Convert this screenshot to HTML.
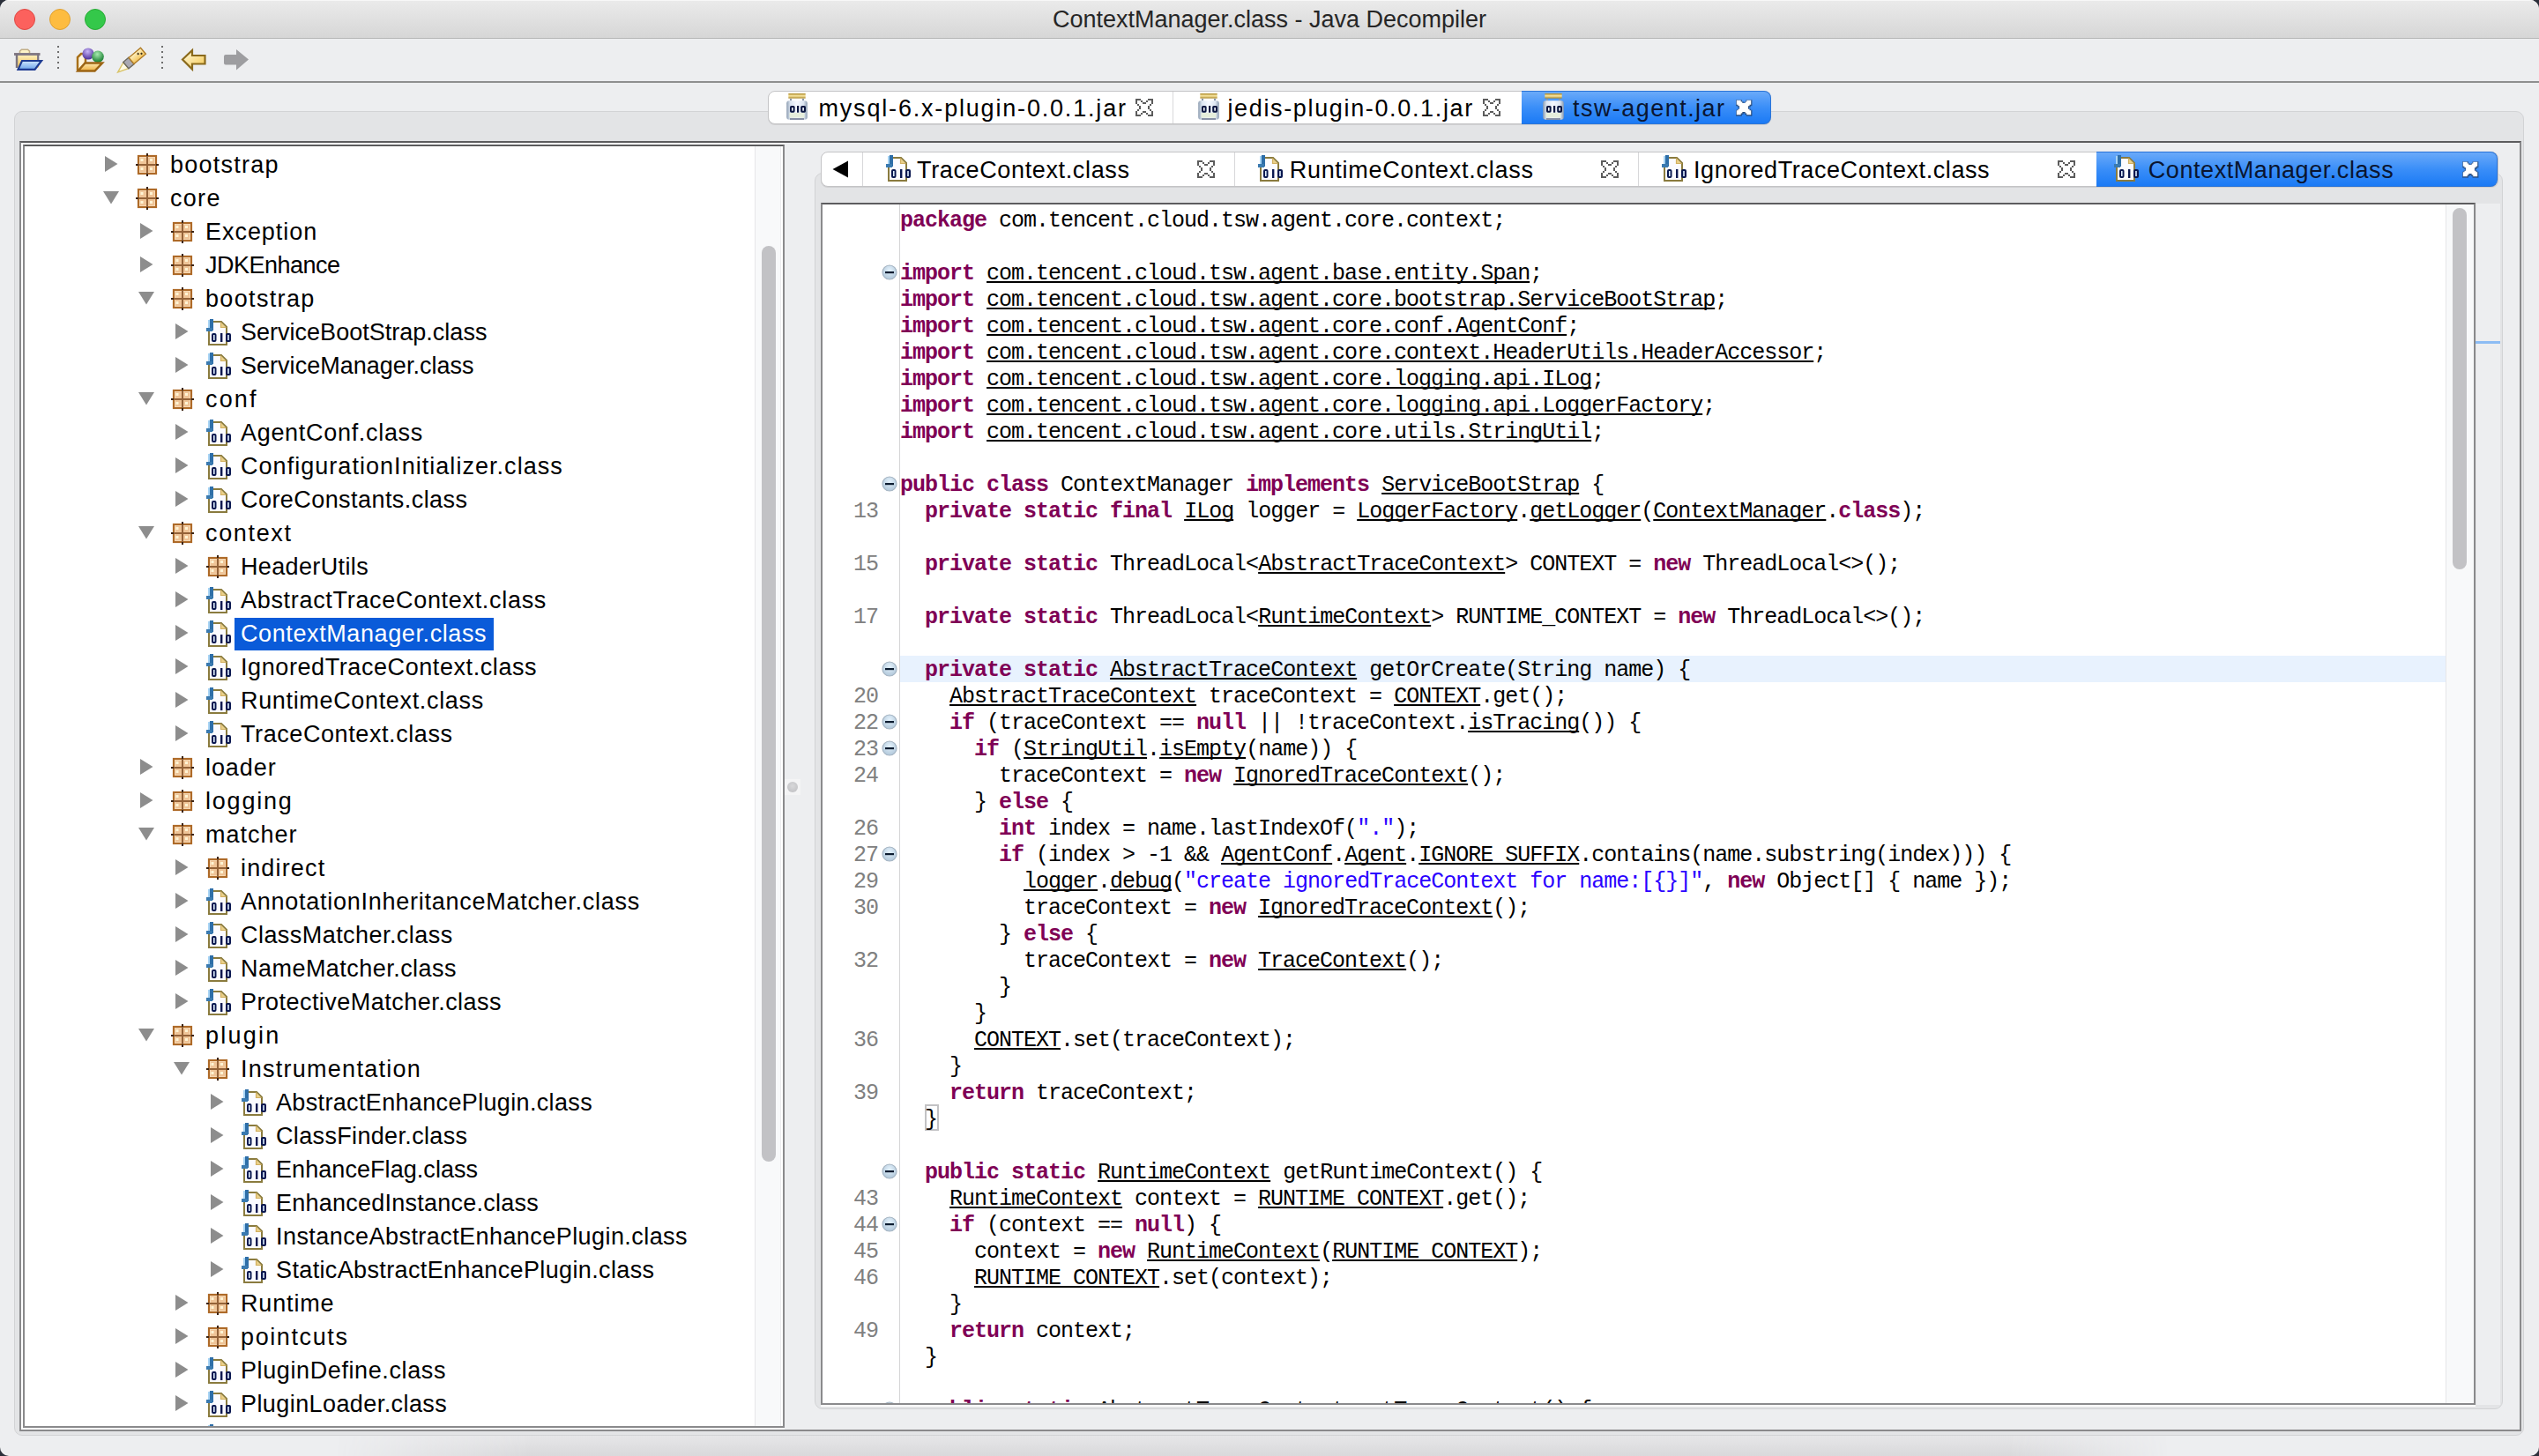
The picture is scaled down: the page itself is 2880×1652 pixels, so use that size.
<!DOCTYPE html><html><head><meta charset="utf-8"><title>ContextManager.class - Java Decompiler</title><style>

*{box-sizing:border-box}
html,body{margin:0;padding:0}
body{width:2880px;height:1652px;overflow:hidden;background:#2b2f3a;position:relative;font-family:"Liberation Sans",sans-serif}
.abs{position:absolute}
#win{position:absolute;left:0;top:0;width:2880px;height:1652px;background:#edeef0;border-radius:10px;overflow:hidden}
.ui{position:absolute;white-space:pre;font-family:"Liberation Sans",sans-serif;font-size:27px;line-height:30px;color:#000}
.code{position:absolute;white-space:pre;font-family:"Liberation Mono",monospace;font-size:25px;line-height:30px;height:30px;color:#000;letter-spacing:-1px}
.k{color:#7f0055;font-weight:bold}
.u{text-decoration:underline;text-decoration-thickness:2px;text-underline-offset:2px;text-decoration-skip-ink:none}
.s{color:#2a00ff}
.ln{position:absolute;white-space:pre;font-family:"Liberation Mono",monospace;font-size:25px;line-height:30px;color:#808080;text-align:right;width:80px;letter-spacing:-1px}

</style></head><body><div id="win">
<div class="abs" style="left:0;top:0;width:2880px;height:44px;background:linear-gradient(#ebebeb,#d6d6d6);border-bottom:1px solid #b6b6b6;box-shadow:inset 0 1px 0 #f8f8f8"></div>
<div class="abs" style="left:16px;top:10px;width:24px;height:24px;border-radius:50%;background:#fc615d;border:1px solid #de4843"></div>
<div class="abs" style="left:56px;top:10px;width:24px;height:24px;border-radius:50%;background:#fdbc40;border:1px solid #dea032"></div>
<div class="abs" style="left:96px;top:10px;width:24px;height:24px;border-radius:50%;background:#34c84a;border:1px solid #27aa35"></div>
<div class="ui" style="left:0;top:7px;width:2880px;text-align:center;font-size:27px;color:#262626">ContextManager.class - Java Decompiler</div>
<div class="abs" style="left:0;top:92px;width:2880px;height:2px;background:#8f8f8f"></div>
<svg class="abs" style="left:0;top:44px" width="300" height="48" viewBox="0 44 300 48">
<defs>
 <linearGradient id="tbY" x1="0" y1="0" x2="0" y2="1"><stop offset="0" stop-color="#fff2c0"/><stop offset="1" stop-color="#f2c35a"/></linearGradient>
 <linearGradient id="tbB" x1="0" y1="0" x2="0" y2="1"><stop offset="0" stop-color="#cfe6fd"/><stop offset="1" stop-color="#6fa6ea"/></linearGradient>
 <linearGradient id="tbO" x1="0" y1="0" x2="0" y2="1"><stop offset="0" stop-color="#fde9b0"/><stop offset="1" stop-color="#eeb040"/></linearGradient>
 <radialGradient id="tbP" cx="45%" cy="30%" r="70%"><stop offset="0" stop-color="#c8b4f8"/><stop offset="1" stop-color="#4a2c98"/></radialGradient>
 <radialGradient id="tbG" cx="45%" cy="30%" r="70%"><stop offset="0" stop-color="#a8eab0"/><stop offset="1" stop-color="#127a2c"/></radialGradient>
 <linearGradient id="tbA" x1="0" y1="0" x2="1" y2="1"><stop offset="0" stop-color="#fffbe0"/><stop offset="1" stop-color="#f6c850"/></linearGradient>
</defs>
<!-- open folder -->
<g>
 <path d="M22.5 60 V58 L24.5 56.2 H31.5 L33.5 58 V60" fill="#fdf4c8" stroke="#c2ae86" stroke-width="1.6"/>
 <rect x="18" y="61.5" width="26" height="15" fill="url(#tbY)"/>
 <path d="M16 61.5 H45.5" stroke="#857c86" stroke-width="3"/>
 <path d="M19 61 V77" stroke="#7a7480" stroke-width="2.4"/>
 <path d="M43.2 61 V68" stroke="#7a7480" stroke-width="2.2"/>
 <path d="M25 69 H47 L39.5 78.8 H20.5 Z" fill="url(#tbB)" stroke="#1f3c92" stroke-width="2.2" stroke-linejoin="miter"/>
</g>
<g fill="#6e6e6e"><rect x="65" y="52" width="2" height="2"/><rect x="65" y="58" width="2" height="2"/><rect x="65" y="64" width="2" height="2"/><rect x="65" y="70" width="2" height="2"/><rect x="65" y="76" width="2" height="2"/></g>
<!-- open type -->
<g>
 <path d="M88 80 V65 L92 61 H97 V72" fill="#fff6e0" stroke="#a8701a" stroke-width="2.5"/>
 <circle cx="100" cy="61" r="6.6" fill="url(#tbP)"/>
 <circle cx="111" cy="64.2" r="6.8" fill="url(#tbG)"/>
 <path d="M96.5 71.5 H116 L107.5 80.5 H88.5 Z" fill="url(#tbO)" stroke="#9c6414" stroke-width="2.5" stroke-linejoin="miter"/>
</g>
<!-- wand -->
<g transform="translate(149 69) rotate(-40)">
 <path d="M-20 0 L-8 -4.5 V4.5 Z" fill="#fffbe4" stroke="#d9c46a" stroke-width="1.4"/>
 <rect x="-8" y="-4.8" width="8" height="9.6" fill="#a9a9b2" stroke="#6c6a60" stroke-width="1.4"/>
 <rect x="0" y="-4.6" width="17.5" height="9.2" fill="url(#tbY)" stroke="#b07c28" stroke-width="1.4"/>
 <rect x="10" y="-2.2" width="2" height="2" fill="#3a3020"/>
 <rect x="13" y="0.2" width="2" height="2" fill="#3a3020"/>
</g>
<g fill="#6e6e6e"><rect x="183" y="52" width="2" height="2"/><rect x="183" y="58" width="2" height="2"/><rect x="183" y="64" width="2" height="2"/><rect x="183" y="70" width="2" height="2"/><rect x="183" y="76" width="2" height="2"/></g>
<!-- back arrow -->
<path d="M207 67.5 L218 57 V63 H232.5 V72.5 H218 V78.5 Z" fill="url(#tbA)" stroke="#8a6a1c" stroke-width="2.2" stroke-linejoin="miter"/>
<!-- forward arrow -->
<path d="M282 67.5 L268 56 V62 H256 Q254 62 254 64 V71.5 Q254 73.5 256 73.5 H268 V79.5 Z" fill="#9d9da0"/>
</svg>
<div class="abs" style="left:16px;top:126px;width:2847px;height:1503px;background:#e3e4e6;border:1px solid #d2d3d5;border-radius:9px"></div>
<div class="abs" style="left:380px;top:1629px;width:2080px;height:23px;background:linear-gradient(#e6e6e8,#d9d9db);-webkit-mask-image:linear-gradient(to right,transparent 0,#000 220px,#000 1900px,transparent 100%);mask-image:linear-gradient(to right,transparent 0,#000 220px,#000 1900px,transparent 100%)"></div>
<div class="abs" style="left:22px;top:160px;width:2838px;height:1464px;border:2px solid #8a8a8c;border-top-color:#5c5c5e;background:#edeef0"></div>
<div class="abs" style="left:871px;top:103px;width:1138px;height:38px;background:#fff;border:1px solid #c4c4c6;border-radius:8px;box-shadow:0 1px 0 #d0d0d2"></div>
<div class="abs" style="left:1330px;top:104px;width:1px;height:36px;background:#d8d8da"></div>
<div class="abs" style="left:1726px;top:103px;width:283px;height:38px;background:linear-gradient(#6aaaf9,#3a8ef8 50%,#1b7af5);border:1px solid #2a74d8;border-left:none;border-radius:0 8px 8px 0"></div>
<svg class="abs" style="left:891px;top:105px" width="26" height="32" viewBox="0 0 26 32">
<defs><linearGradient id="jl" x1="0" y1="0" x2="0" y2="1"><stop offset="0" stop-color="#a88424"/><stop offset="0.5" stop-color="#fbe9a4"/><stop offset="1" stop-color="#a88424"/></linearGradient>
<linearGradient id="jb" x1="0" y1="0" x2="1" y2="0"><stop offset="0" stop-color="#8c9cb0"/><stop offset="0.18" stop-color="#dde6f2"/><stop offset="0.5" stop-color="#f6f9ff"/><stop offset="0.82" stop-color="#dde6f2"/><stop offset="1" stop-color="#8c9cb0"/></linearGradient></defs>
<rect x="3.3" y="1" width="19.4" height="5.6" fill="url(#jl)"/>
<rect x="5" y="7" width="2" height="2.4" fill="#8a98ac"/><rect x="19" y="7" width="2" height="2.4" fill="#8a98ac"/>
<rect x="1.2" y="9.2" width="23.6" height="21.6" rx="3" fill="url(#jb)"/>
<rect x="4.5" y="23" width="17" height="5.5" fill="#e6eedc"/>
<rect x="5" y="29" width="16" height="2" fill="#8890a6"/>
<g fill="#0a1640"><rect x="5" y="15" width="5.6" height="7.7" rx="1.6"/><rect x="13" y="15" width="2.2" height="7.7"/><rect x="17.2" y="15" width="5.8" height="7.7" rx="1.6"/></g>
<g fill="#f6f9ff"><rect x="7" y="17" width="1.6" height="3.7"/><rect x="19.3" y="17" width="1.6" height="3.7"/></g>
</svg>
<div class="ui" style="left:928.5px;top:108px;letter-spacing:1.814px;color:#000">mysql-6.x-plugin-0.0.1.jar</div>
<svg class="abs" style="left:1288px;top:112px" width="20" height="20" viewBox="0 0 20 20" shape-rendering="crispEdges"><g fill="#5c5c5c"><rect x="0" y="0" width="2" height="2"/><rect x="0" y="2" width="2" height="2"/><rect x="0" y="4" width="2" height="2"/><rect x="0" y="14" width="2" height="2"/><rect x="0" y="16" width="2" height="2"/><rect x="0" y="18" width="2" height="2"/><rect x="2" y="0" width="2" height="2"/><rect x="2" y="6" width="2" height="2"/><rect x="2" y="12" width="2" height="2"/><rect x="2" y="18" width="2" height="2"/><rect x="4" y="0" width="2" height="2"/><rect x="4" y="8" width="2" height="2"/><rect x="4" y="10" width="2" height="2"/><rect x="4" y="18" width="2" height="2"/><rect x="6" y="2" width="2" height="2"/><rect x="6" y="16" width="2" height="2"/><rect x="8" y="4" width="2" height="2"/><rect x="8" y="14" width="2" height="2"/><rect x="10" y="4" width="2" height="2"/><rect x="10" y="14" width="2" height="2"/><rect x="12" y="2" width="2" height="2"/><rect x="12" y="16" width="2" height="2"/><rect x="14" y="0" width="2" height="2"/><rect x="14" y="8" width="2" height="2"/><rect x="14" y="10" width="2" height="2"/><rect x="14" y="18" width="2" height="2"/><rect x="16" y="0" width="2" height="2"/><rect x="16" y="6" width="2" height="2"/><rect x="16" y="12" width="2" height="2"/><rect x="16" y="18" width="2" height="2"/><rect x="18" y="0" width="2" height="2"/><rect x="18" y="2" width="2" height="2"/><rect x="18" y="4" width="2" height="2"/><rect x="18" y="14" width="2" height="2"/><rect x="18" y="16" width="2" height="2"/><rect x="18" y="18" width="2" height="2"/></g></svg>
<svg class="abs" style="left:1358px;top:105px" width="26" height="32" viewBox="0 0 26 32">
<defs><linearGradient id="jl" x1="0" y1="0" x2="0" y2="1"><stop offset="0" stop-color="#a88424"/><stop offset="0.5" stop-color="#fbe9a4"/><stop offset="1" stop-color="#a88424"/></linearGradient>
<linearGradient id="jb" x1="0" y1="0" x2="1" y2="0"><stop offset="0" stop-color="#8c9cb0"/><stop offset="0.18" stop-color="#dde6f2"/><stop offset="0.5" stop-color="#f6f9ff"/><stop offset="0.82" stop-color="#dde6f2"/><stop offset="1" stop-color="#8c9cb0"/></linearGradient></defs>
<rect x="3.3" y="1" width="19.4" height="5.6" fill="url(#jl)"/>
<rect x="5" y="7" width="2" height="2.4" fill="#8a98ac"/><rect x="19" y="7" width="2" height="2.4" fill="#8a98ac"/>
<rect x="1.2" y="9.2" width="23.6" height="21.6" rx="3" fill="url(#jb)"/>
<rect x="4.5" y="23" width="17" height="5.5" fill="#e6eedc"/>
<rect x="5" y="29" width="16" height="2" fill="#8890a6"/>
<g fill="#0a1640"><rect x="5" y="15" width="5.6" height="7.7" rx="1.6"/><rect x="13" y="15" width="2.2" height="7.7"/><rect x="17.2" y="15" width="5.8" height="7.7" rx="1.6"/></g>
<g fill="#f6f9ff"><rect x="7" y="17" width="1.6" height="3.7"/><rect x="19.3" y="17" width="1.6" height="3.7"/></g>
</svg>
<div class="ui" style="left:1392.4px;top:108px;letter-spacing:1.653px;color:#000">jedis-plugin-0.0.1.jar</div>
<svg class="abs" style="left:1682px;top:112px" width="20" height="20" viewBox="0 0 20 20" shape-rendering="crispEdges"><g fill="#5c5c5c"><rect x="0" y="0" width="2" height="2"/><rect x="0" y="2" width="2" height="2"/><rect x="0" y="4" width="2" height="2"/><rect x="0" y="14" width="2" height="2"/><rect x="0" y="16" width="2" height="2"/><rect x="0" y="18" width="2" height="2"/><rect x="2" y="0" width="2" height="2"/><rect x="2" y="6" width="2" height="2"/><rect x="2" y="12" width="2" height="2"/><rect x="2" y="18" width="2" height="2"/><rect x="4" y="0" width="2" height="2"/><rect x="4" y="8" width="2" height="2"/><rect x="4" y="10" width="2" height="2"/><rect x="4" y="18" width="2" height="2"/><rect x="6" y="2" width="2" height="2"/><rect x="6" y="16" width="2" height="2"/><rect x="8" y="4" width="2" height="2"/><rect x="8" y="14" width="2" height="2"/><rect x="10" y="4" width="2" height="2"/><rect x="10" y="14" width="2" height="2"/><rect x="12" y="2" width="2" height="2"/><rect x="12" y="16" width="2" height="2"/><rect x="14" y="0" width="2" height="2"/><rect x="14" y="8" width="2" height="2"/><rect x="14" y="10" width="2" height="2"/><rect x="14" y="18" width="2" height="2"/><rect x="16" y="0" width="2" height="2"/><rect x="16" y="6" width="2" height="2"/><rect x="16" y="12" width="2" height="2"/><rect x="16" y="18" width="2" height="2"/><rect x="18" y="0" width="2" height="2"/><rect x="18" y="2" width="2" height="2"/><rect x="18" y="4" width="2" height="2"/><rect x="18" y="14" width="2" height="2"/><rect x="18" y="16" width="2" height="2"/><rect x="18" y="18" width="2" height="2"/></g></svg>
<svg class="abs" style="left:1749px;top:105px" width="26" height="32" viewBox="0 0 26 32">
<defs><linearGradient id="jl" x1="0" y1="0" x2="0" y2="1"><stop offset="0" stop-color="#a88424"/><stop offset="0.5" stop-color="#fbe9a4"/><stop offset="1" stop-color="#a88424"/></linearGradient>
<linearGradient id="jb" x1="0" y1="0" x2="1" y2="0"><stop offset="0" stop-color="#8c9cb0"/><stop offset="0.18" stop-color="#dde6f2"/><stop offset="0.5" stop-color="#f6f9ff"/><stop offset="0.82" stop-color="#dde6f2"/><stop offset="1" stop-color="#8c9cb0"/></linearGradient></defs>
<rect x="3.3" y="1" width="19.4" height="5.6" fill="url(#jl)"/>
<rect x="5" y="7" width="2" height="2.4" fill="#8a98ac"/><rect x="19" y="7" width="2" height="2.4" fill="#8a98ac"/>
<rect x="1.2" y="9.2" width="23.6" height="21.6" rx="3" fill="url(#jb)"/>
<rect x="4.5" y="23" width="17" height="5.5" fill="#e6eedc"/>
<rect x="5" y="29" width="16" height="2" fill="#8890a6"/>
<g fill="#0a1640"><rect x="5" y="15" width="5.6" height="7.7" rx="1.6"/><rect x="13" y="15" width="2.2" height="7.7"/><rect x="17.2" y="15" width="5.8" height="7.7" rx="1.6"/></g>
<g fill="#f6f9ff"><rect x="7" y="17" width="1.6" height="3.7"/><rect x="19.3" y="17" width="1.6" height="3.7"/></g>
</svg>
<div class="ui" style="left:1784.0px;top:108px;letter-spacing:1.456px;color:#0a1530">tsw-agent.jar</div>
<svg class="abs" style="left:1968px;top:112px" width="20" height="20" viewBox="0 0 20 20"><g transform="translate(10 10) scale(0.82) translate(-10 -10)"><path d="M0 0 L6 0 L6 2 L8 2 L8 4 L12 4 L12 2 L14 2 L14 0 L20 0 L20 6 L18 6 L18 8 L16 8 L16 12 L18 12 L18 14 L20 14 L20 20 L14 20 L14 18 L12 18 L12 16 L8 16 L8 18 L6 18 L6 20 L0 20 L0 14 L2 14 L2 12 L4 12 L4 8 L2 8 L2 6 L0 6 Z" fill="#1e2a40" fill-opacity="0.55" stroke="#1e2a40" stroke-opacity="0.55" stroke-width="2.4" transform="translate(0.3 0.6)"/><path d="M0 0 L6 0 L6 2 L8 2 L8 4 L12 4 L12 2 L14 2 L14 0 L20 0 L20 6 L18 6 L18 8 L16 8 L16 12 L18 12 L18 14 L20 14 L20 20 L14 20 L14 18 L12 18 L12 16 L8 16 L8 18 L6 18 L6 20 L0 20 L0 14 L2 14 L2 12 L4 12 L4 8 L2 8 L2 6 L0 6 Z" fill="#ffffff"/></g></svg>
<div class="abs" style="left:24px;top:162px;width:866px;height:1460px;background:#fff"></div><div class="abs" style="left:26px;top:164px;width:864px;height:1456px;border:2px solid #8a8a8c;border-top-color:#5c5c5e;background:#fff;overflow:hidden">
<div class="abs" style="left:828px;top:0;width:30px;height:1452px;background:#f8f9fa;border-left:1px solid #e6e6e8;border-right:1px solid #ededee"></div>
<div class="abs" style="left:836px;top:113px;width:16px;height:1039px;background:#c2c2c5;border-radius:8px"></div>
<svg class="abs" style="left:90px;top:11px" width="16" height="18" viewBox="0 0 16 18"><path d="M1 0 V18 L15.5 9 Z" fill="#8d8d8d"/></svg>
<svg class="abs" style="left:126px;top:7px" width="26" height="28" viewBox="0 0 26 28">
<rect x="3" y="4" width="20" height="20" fill="#efc497" stroke="#ae6a28" stroke-width="2.2"/>
<rect x="4.5" y="5.5" width="17" height="17" fill="none" stroke="#f6d8b4" stroke-width="1"/>
<g fill="#fff4d4"><rect x="5.5" y="7" width="3" height="3"/><rect x="16" y="7" width="3" height="3"/><rect x="5.5" y="17" width="3" height="3"/><rect x="16" y="17" width="3" height="3"/></g>
<rect x="12" y="4" width="2" height="20" fill="#946238"/>
<rect x="3" y="13" width="20" height="2" fill="#946238"/>
<g fill="#3c2412"><rect x="12" y="1" width="2" height="3"/><rect x="12" y="24" width="2" height="3"/><rect x="0" y="13" width="3" height="2"/><rect x="23" y="13" width="3" height="2"/></g>
</svg>
<div class="ui" style="left:165px;top:6px;letter-spacing:1.258px">bootstrap</div>
<svg class="abs" style="left:89px;top:50px" width="18" height="16" viewBox="0 0 18 16"><path d="M0 1 H18 L9 15.5 Z" fill="#8d8d8d"/></svg>
<svg class="abs" style="left:126px;top:45px" width="26" height="28" viewBox="0 0 26 28">
<rect x="3" y="4" width="20" height="20" fill="#efc497" stroke="#ae6a28" stroke-width="2.2"/>
<rect x="4.5" y="5.5" width="17" height="17" fill="none" stroke="#f6d8b4" stroke-width="1"/>
<g fill="#fff4d4"><rect x="5.5" y="7" width="3" height="3"/><rect x="16" y="7" width="3" height="3"/><rect x="5.5" y="17" width="3" height="3"/><rect x="16" y="17" width="3" height="3"/></g>
<rect x="12" y="4" width="2" height="20" fill="#946238"/>
<rect x="3" y="13" width="20" height="2" fill="#946238"/>
<g fill="#3c2412"><rect x="12" y="1" width="2" height="3"/><rect x="12" y="24" width="2" height="3"/><rect x="0" y="13" width="3" height="2"/><rect x="23" y="13" width="3" height="2"/></g>
</svg>
<div class="ui" style="left:165px;top:44px;letter-spacing:1.292px">core</div>
<svg class="abs" style="left:130px;top:87px" width="16" height="18" viewBox="0 0 16 18"><path d="M1 0 V18 L15.5 9 Z" fill="#8d8d8d"/></svg>
<svg class="abs" style="left:166px;top:83px" width="26" height="28" viewBox="0 0 26 28">
<rect x="3" y="4" width="20" height="20" fill="#efc497" stroke="#ae6a28" stroke-width="2.2"/>
<rect x="4.5" y="5.5" width="17" height="17" fill="none" stroke="#f6d8b4" stroke-width="1"/>
<g fill="#fff4d4"><rect x="5.5" y="7" width="3" height="3"/><rect x="16" y="7" width="3" height="3"/><rect x="5.5" y="17" width="3" height="3"/><rect x="16" y="17" width="3" height="3"/></g>
<rect x="12" y="4" width="2" height="20" fill="#946238"/>
<rect x="3" y="13" width="20" height="2" fill="#946238"/>
<g fill="#3c2412"><rect x="12" y="1" width="2" height="3"/><rect x="12" y="24" width="2" height="3"/><rect x="0" y="13" width="3" height="2"/><rect x="23" y="13" width="3" height="2"/></g>
</svg>
<div class="ui" style="left:205px;top:82px;letter-spacing:0.958px">Exception</div>
<svg class="abs" style="left:130px;top:125px" width="16" height="18" viewBox="0 0 16 18"><path d="M1 0 V18 L15.5 9 Z" fill="#8d8d8d"/></svg>
<svg class="abs" style="left:166px;top:121px" width="26" height="28" viewBox="0 0 26 28">
<rect x="3" y="4" width="20" height="20" fill="#efc497" stroke="#ae6a28" stroke-width="2.2"/>
<rect x="4.5" y="5.5" width="17" height="17" fill="none" stroke="#f6d8b4" stroke-width="1"/>
<g fill="#fff4d4"><rect x="5.5" y="7" width="3" height="3"/><rect x="16" y="7" width="3" height="3"/><rect x="5.5" y="17" width="3" height="3"/><rect x="16" y="17" width="3" height="3"/></g>
<rect x="12" y="4" width="2" height="20" fill="#946238"/>
<rect x="3" y="13" width="20" height="2" fill="#946238"/>
<g fill="#3c2412"><rect x="12" y="1" width="2" height="3"/><rect x="12" y="24" width="2" height="3"/><rect x="0" y="13" width="3" height="2"/><rect x="23" y="13" width="3" height="2"/></g>
</svg>
<div class="ui" style="left:205px;top:120px;letter-spacing:-0.501px">JDKEnhance</div>
<svg class="abs" style="left:129px;top:164px" width="18" height="16" viewBox="0 0 18 16"><path d="M0 1 H18 L9 15.5 Z" fill="#8d8d8d"/></svg>
<svg class="abs" style="left:166px;top:159px" width="26" height="28" viewBox="0 0 26 28">
<rect x="3" y="4" width="20" height="20" fill="#efc497" stroke="#ae6a28" stroke-width="2.2"/>
<rect x="4.5" y="5.5" width="17" height="17" fill="none" stroke="#f6d8b4" stroke-width="1"/>
<g fill="#fff4d4"><rect x="5.5" y="7" width="3" height="3"/><rect x="16" y="7" width="3" height="3"/><rect x="5.5" y="17" width="3" height="3"/><rect x="16" y="17" width="3" height="3"/></g>
<rect x="12" y="4" width="2" height="20" fill="#946238"/>
<rect x="3" y="13" width="20" height="2" fill="#946238"/>
<g fill="#3c2412"><rect x="12" y="1" width="2" height="3"/><rect x="12" y="24" width="2" height="3"/><rect x="0" y="13" width="3" height="2"/><rect x="23" y="13" width="3" height="2"/></g>
</svg>
<div class="ui" style="left:205px;top:158px;letter-spacing:1.336px">bootstrap</div>
<svg class="abs" style="left:170px;top:201px" width="16" height="18" viewBox="0 0 16 18"><path d="M1 0 V18 L15.5 9 Z" fill="#8d8d8d"/></svg>
<svg class="abs" style="left:204px;top:196px" width="32" height="32" viewBox="0 0 32 32">
<path d="M5 3 H19 L25 9 V29 H5 Z" fill="#fbfbff" stroke="#8a7b3e" stroke-width="2"/>
<path d="M18.5 3.5 V9.5 H24.5" fill="#ead08a" stroke="#d2b060" stroke-width="1.2"/>
<rect x="6" y="0" width="4" height="13" fill="#2e6ea8"/>
<rect x="2" y="10" width="7" height="4" fill="#3a7ab0"/>
<rect x="4" y="1" width="2" height="9" fill="#a8d4f4"/>
<g fill="#0a1850"><rect x="8" y="16" width="5.5" height="10" rx="2"/><rect x="18" y="16" width="2.4" height="10"/><rect x="24" y="16" width="6" height="10" rx="2"/></g>
<g fill="#dfeefe"><rect x="10" y="18" width="1.6" height="6"/><rect x="26.2" y="18" width="1.6" height="6"/></g>
</svg>
<div class="ui" style="left:245px;top:196px;letter-spacing:0.013px">ServiceBootStrap.class</div>
<svg class="abs" style="left:170px;top:239px" width="16" height="18" viewBox="0 0 16 18"><path d="M1 0 V18 L15.5 9 Z" fill="#8d8d8d"/></svg>
<svg class="abs" style="left:204px;top:234px" width="32" height="32" viewBox="0 0 32 32">
<path d="M5 3 H19 L25 9 V29 H5 Z" fill="#fbfbff" stroke="#8a7b3e" stroke-width="2"/>
<path d="M18.5 3.5 V9.5 H24.5" fill="#ead08a" stroke="#d2b060" stroke-width="1.2"/>
<rect x="6" y="0" width="4" height="13" fill="#2e6ea8"/>
<rect x="2" y="10" width="7" height="4" fill="#3a7ab0"/>
<rect x="4" y="1" width="2" height="9" fill="#a8d4f4"/>
<g fill="#0a1850"><rect x="8" y="16" width="5.5" height="10" rx="2"/><rect x="18" y="16" width="2.4" height="10"/><rect x="24" y="16" width="6" height="10" rx="2"/></g>
<g fill="#dfeefe"><rect x="10" y="18" width="1.6" height="6"/><rect x="26.2" y="18" width="1.6" height="6"/></g>
</svg>
<div class="ui" style="left:245px;top:234px;letter-spacing:0.024px">ServiceManager.class</div>
<svg class="abs" style="left:129px;top:278px" width="18" height="16" viewBox="0 0 18 16"><path d="M0 1 H18 L9 15.5 Z" fill="#8d8d8d"/></svg>
<svg class="abs" style="left:166px;top:273px" width="26" height="28" viewBox="0 0 26 28">
<rect x="3" y="4" width="20" height="20" fill="#efc497" stroke="#ae6a28" stroke-width="2.2"/>
<rect x="4.5" y="5.5" width="17" height="17" fill="none" stroke="#f6d8b4" stroke-width="1"/>
<g fill="#fff4d4"><rect x="5.5" y="7" width="3" height="3"/><rect x="16" y="7" width="3" height="3"/><rect x="5.5" y="17" width="3" height="3"/><rect x="16" y="17" width="3" height="3"/></g>
<rect x="12" y="4" width="2" height="20" fill="#946238"/>
<rect x="3" y="13" width="20" height="2" fill="#946238"/>
<g fill="#3c2412"><rect x="12" y="1" width="2" height="3"/><rect x="12" y="24" width="2" height="3"/><rect x="0" y="13" width="3" height="2"/><rect x="23" y="13" width="3" height="2"/></g>
</svg>
<div class="ui" style="left:205px;top:272px;letter-spacing:2.138px">conf</div>
<svg class="abs" style="left:170px;top:315px" width="16" height="18" viewBox="0 0 16 18"><path d="M1 0 V18 L15.5 9 Z" fill="#8d8d8d"/></svg>
<svg class="abs" style="left:204px;top:310px" width="32" height="32" viewBox="0 0 32 32">
<path d="M5 3 H19 L25 9 V29 H5 Z" fill="#fbfbff" stroke="#8a7b3e" stroke-width="2"/>
<path d="M18.5 3.5 V9.5 H24.5" fill="#ead08a" stroke="#d2b060" stroke-width="1.2"/>
<rect x="6" y="0" width="4" height="13" fill="#2e6ea8"/>
<rect x="2" y="10" width="7" height="4" fill="#3a7ab0"/>
<rect x="4" y="1" width="2" height="9" fill="#a8d4f4"/>
<g fill="#0a1850"><rect x="8" y="16" width="5.5" height="10" rx="2"/><rect x="18" y="16" width="2.4" height="10"/><rect x="24" y="16" width="6" height="10" rx="2"/></g>
<g fill="#dfeefe"><rect x="10" y="18" width="1.6" height="6"/><rect x="26.2" y="18" width="1.6" height="6"/></g>
</svg>
<div class="ui" style="left:245px;top:310px;letter-spacing:0.693px">AgentConf.class</div>
<svg class="abs" style="left:170px;top:353px" width="16" height="18" viewBox="0 0 16 18"><path d="M1 0 V18 L15.5 9 Z" fill="#8d8d8d"/></svg>
<svg class="abs" style="left:204px;top:348px" width="32" height="32" viewBox="0 0 32 32">
<path d="M5 3 H19 L25 9 V29 H5 Z" fill="#fbfbff" stroke="#8a7b3e" stroke-width="2"/>
<path d="M18.5 3.5 V9.5 H24.5" fill="#ead08a" stroke="#d2b060" stroke-width="1.2"/>
<rect x="6" y="0" width="4" height="13" fill="#2e6ea8"/>
<rect x="2" y="10" width="7" height="4" fill="#3a7ab0"/>
<rect x="4" y="1" width="2" height="9" fill="#a8d4f4"/>
<g fill="#0a1850"><rect x="8" y="16" width="5.5" height="10" rx="2"/><rect x="18" y="16" width="2.4" height="10"/><rect x="24" y="16" width="6" height="10" rx="2"/></g>
<g fill="#dfeefe"><rect x="10" y="18" width="1.6" height="6"/><rect x="26.2" y="18" width="1.6" height="6"/></g>
</svg>
<div class="ui" style="left:245px;top:348px;letter-spacing:1.038px">ConfigurationInitializer.class</div>
<svg class="abs" style="left:170px;top:391px" width="16" height="18" viewBox="0 0 16 18"><path d="M1 0 V18 L15.5 9 Z" fill="#8d8d8d"/></svg>
<svg class="abs" style="left:204px;top:386px" width="32" height="32" viewBox="0 0 32 32">
<path d="M5 3 H19 L25 9 V29 H5 Z" fill="#fbfbff" stroke="#8a7b3e" stroke-width="2"/>
<path d="M18.5 3.5 V9.5 H24.5" fill="#ead08a" stroke="#d2b060" stroke-width="1.2"/>
<rect x="6" y="0" width="4" height="13" fill="#2e6ea8"/>
<rect x="2" y="10" width="7" height="4" fill="#3a7ab0"/>
<rect x="4" y="1" width="2" height="9" fill="#a8d4f4"/>
<g fill="#0a1850"><rect x="8" y="16" width="5.5" height="10" rx="2"/><rect x="18" y="16" width="2.4" height="10"/><rect x="24" y="16" width="6" height="10" rx="2"/></g>
<g fill="#dfeefe"><rect x="10" y="18" width="1.6" height="6"/><rect x="26.2" y="18" width="1.6" height="6"/></g>
</svg>
<div class="ui" style="left:245px;top:386px;letter-spacing:0.436px">CoreConstants.class</div>
<svg class="abs" style="left:129px;top:430px" width="18" height="16" viewBox="0 0 18 16"><path d="M0 1 H18 L9 15.5 Z" fill="#8d8d8d"/></svg>
<svg class="abs" style="left:166px;top:425px" width="26" height="28" viewBox="0 0 26 28">
<rect x="3" y="4" width="20" height="20" fill="#efc497" stroke="#ae6a28" stroke-width="2.2"/>
<rect x="4.5" y="5.5" width="17" height="17" fill="none" stroke="#f6d8b4" stroke-width="1"/>
<g fill="#fff4d4"><rect x="5.5" y="7" width="3" height="3"/><rect x="16" y="7" width="3" height="3"/><rect x="5.5" y="17" width="3" height="3"/><rect x="16" y="17" width="3" height="3"/></g>
<rect x="12" y="4" width="2" height="20" fill="#946238"/>
<rect x="3" y="13" width="20" height="2" fill="#946238"/>
<g fill="#3c2412"><rect x="12" y="1" width="2" height="3"/><rect x="12" y="24" width="2" height="3"/><rect x="0" y="13" width="3" height="2"/><rect x="23" y="13" width="3" height="2"/></g>
</svg>
<div class="ui" style="left:205px;top:424px;letter-spacing:1.648px">context</div>
<svg class="abs" style="left:170px;top:467px" width="16" height="18" viewBox="0 0 16 18"><path d="M1 0 V18 L15.5 9 Z" fill="#8d8d8d"/></svg>
<svg class="abs" style="left:206px;top:463px" width="26" height="28" viewBox="0 0 26 28">
<rect x="3" y="4" width="20" height="20" fill="#efc497" stroke="#ae6a28" stroke-width="2.2"/>
<rect x="4.5" y="5.5" width="17" height="17" fill="none" stroke="#f6d8b4" stroke-width="1"/>
<g fill="#fff4d4"><rect x="5.5" y="7" width="3" height="3"/><rect x="16" y="7" width="3" height="3"/><rect x="5.5" y="17" width="3" height="3"/><rect x="16" y="17" width="3" height="3"/></g>
<rect x="12" y="4" width="2" height="20" fill="#946238"/>
<rect x="3" y="13" width="20" height="2" fill="#946238"/>
<g fill="#3c2412"><rect x="12" y="1" width="2" height="3"/><rect x="12" y="24" width="2" height="3"/><rect x="0" y="13" width="3" height="2"/><rect x="23" y="13" width="3" height="2"/></g>
</svg>
<div class="ui" style="left:245px;top:462px;letter-spacing:0.358px">HeaderUtils</div>
<svg class="abs" style="left:170px;top:505px" width="16" height="18" viewBox="0 0 16 18"><path d="M1 0 V18 L15.5 9 Z" fill="#8d8d8d"/></svg>
<svg class="abs" style="left:204px;top:500px" width="32" height="32" viewBox="0 0 32 32">
<path d="M5 3 H19 L25 9 V29 H5 Z" fill="#fbfbff" stroke="#8a7b3e" stroke-width="2"/>
<path d="M18.5 3.5 V9.5 H24.5" fill="#ead08a" stroke="#d2b060" stroke-width="1.2"/>
<rect x="6" y="0" width="4" height="13" fill="#2e6ea8"/>
<rect x="2" y="10" width="7" height="4" fill="#3a7ab0"/>
<rect x="4" y="1" width="2" height="9" fill="#a8d4f4"/>
<g fill="#0a1850"><rect x="8" y="16" width="5.5" height="10" rx="2"/><rect x="18" y="16" width="2.4" height="10"/><rect x="24" y="16" width="6" height="10" rx="2"/></g>
<g fill="#dfeefe"><rect x="10" y="18" width="1.6" height="6"/><rect x="26.2" y="18" width="1.6" height="6"/></g>
</svg>
<div class="ui" style="left:245px;top:500px;letter-spacing:0.688px">AbstractTraceContext.class</div>
<svg class="abs" style="left:170px;top:543px" width="16" height="18" viewBox="0 0 16 18"><path d="M1 0 V18 L15.5 9 Z" fill="#8d8d8d"/></svg>
<svg class="abs" style="left:204px;top:538px" width="32" height="32" viewBox="0 0 32 32">
<path d="M5 3 H19 L25 9 V29 H5 Z" fill="#fbfbff" stroke="#8a7b3e" stroke-width="2"/>
<path d="M18.5 3.5 V9.5 H24.5" fill="#ead08a" stroke="#d2b060" stroke-width="1.2"/>
<rect x="6" y="0" width="4" height="13" fill="#2e6ea8"/>
<rect x="2" y="10" width="7" height="4" fill="#3a7ab0"/>
<rect x="4" y="1" width="2" height="9" fill="#a8d4f4"/>
<g fill="#0a1850"><rect x="8" y="16" width="5.5" height="10" rx="2"/><rect x="18" y="16" width="2.4" height="10"/><rect x="24" y="16" width="6" height="10" rx="2"/></g>
<g fill="#dfeefe"><rect x="10" y="18" width="1.6" height="6"/><rect x="26.2" y="18" width="1.6" height="6"/></g>
</svg>
<div class="abs" style="left:238px;top:535px;width:294px;height:37px;background:#0a5bd9"></div>
<div class="ui" style="left:245px;top:538px;letter-spacing:0.603px;color:#fff">ContextManager.class</div>
<svg class="abs" style="left:170px;top:581px" width="16" height="18" viewBox="0 0 16 18"><path d="M1 0 V18 L15.5 9 Z" fill="#8d8d8d"/></svg>
<svg class="abs" style="left:204px;top:576px" width="32" height="32" viewBox="0 0 32 32">
<path d="M5 3 H19 L25 9 V29 H5 Z" fill="#fbfbff" stroke="#8a7b3e" stroke-width="2"/>
<path d="M18.5 3.5 V9.5 H24.5" fill="#ead08a" stroke="#d2b060" stroke-width="1.2"/>
<rect x="6" y="0" width="4" height="13" fill="#2e6ea8"/>
<rect x="2" y="10" width="7" height="4" fill="#3a7ab0"/>
<rect x="4" y="1" width="2" height="9" fill="#a8d4f4"/>
<g fill="#0a1850"><rect x="8" y="16" width="5.5" height="10" rx="2"/><rect x="18" y="16" width="2.4" height="10"/><rect x="24" y="16" width="6" height="10" rx="2"/></g>
<g fill="#dfeefe"><rect x="10" y="18" width="1.6" height="6"/><rect x="26.2" y="18" width="1.6" height="6"/></g>
</svg>
<div class="ui" style="left:245px;top:576px;letter-spacing:0.582px">IgnoredTraceContext.class</div>
<svg class="abs" style="left:170px;top:619px" width="16" height="18" viewBox="0 0 16 18"><path d="M1 0 V18 L15.5 9 Z" fill="#8d8d8d"/></svg>
<svg class="abs" style="left:204px;top:614px" width="32" height="32" viewBox="0 0 32 32">
<path d="M5 3 H19 L25 9 V29 H5 Z" fill="#fbfbff" stroke="#8a7b3e" stroke-width="2"/>
<path d="M18.5 3.5 V9.5 H24.5" fill="#ead08a" stroke="#d2b060" stroke-width="1.2"/>
<rect x="6" y="0" width="4" height="13" fill="#2e6ea8"/>
<rect x="2" y="10" width="7" height="4" fill="#3a7ab0"/>
<rect x="4" y="1" width="2" height="9" fill="#a8d4f4"/>
<g fill="#0a1850"><rect x="8" y="16" width="5.5" height="10" rx="2"/><rect x="18" y="16" width="2.4" height="10"/><rect x="24" y="16" width="6" height="10" rx="2"/></g>
<g fill="#dfeefe"><rect x="10" y="18" width="1.6" height="6"/><rect x="26.2" y="18" width="1.6" height="6"/></g>
</svg>
<div class="ui" style="left:245px;top:614px;letter-spacing:0.660px">RuntimeContext.class</div>
<svg class="abs" style="left:170px;top:657px" width="16" height="18" viewBox="0 0 16 18"><path d="M1 0 V18 L15.5 9 Z" fill="#8d8d8d"/></svg>
<svg class="abs" style="left:204px;top:652px" width="32" height="32" viewBox="0 0 32 32">
<path d="M5 3 H19 L25 9 V29 H5 Z" fill="#fbfbff" stroke="#8a7b3e" stroke-width="2"/>
<path d="M18.5 3.5 V9.5 H24.5" fill="#ead08a" stroke="#d2b060" stroke-width="1.2"/>
<rect x="6" y="0" width="4" height="13" fill="#2e6ea8"/>
<rect x="2" y="10" width="7" height="4" fill="#3a7ab0"/>
<rect x="4" y="1" width="2" height="9" fill="#a8d4f4"/>
<g fill="#0a1850"><rect x="8" y="16" width="5.5" height="10" rx="2"/><rect x="18" y="16" width="2.4" height="10"/><rect x="24" y="16" width="6" height="10" rx="2"/></g>
<g fill="#dfeefe"><rect x="10" y="18" width="1.6" height="6"/><rect x="26.2" y="18" width="1.6" height="6"/></g>
</svg>
<div class="ui" style="left:245px;top:652px;letter-spacing:0.584px">TraceContext.class</div>
<svg class="abs" style="left:130px;top:695px" width="16" height="18" viewBox="0 0 16 18"><path d="M1 0 V18 L15.5 9 Z" fill="#8d8d8d"/></svg>
<svg class="abs" style="left:166px;top:691px" width="26" height="28" viewBox="0 0 26 28">
<rect x="3" y="4" width="20" height="20" fill="#efc497" stroke="#ae6a28" stroke-width="2.2"/>
<rect x="4.5" y="5.5" width="17" height="17" fill="none" stroke="#f6d8b4" stroke-width="1"/>
<g fill="#fff4d4"><rect x="5.5" y="7" width="3" height="3"/><rect x="16" y="7" width="3" height="3"/><rect x="5.5" y="17" width="3" height="3"/><rect x="16" y="17" width="3" height="3"/></g>
<rect x="12" y="4" width="2" height="20" fill="#946238"/>
<rect x="3" y="13" width="20" height="2" fill="#946238"/>
<g fill="#3c2412"><rect x="12" y="1" width="2" height="3"/><rect x="12" y="24" width="2" height="3"/><rect x="0" y="13" width="3" height="2"/><rect x="23" y="13" width="3" height="2"/></g>
</svg>
<div class="ui" style="left:205px;top:690px;letter-spacing:0.923px">loader</div>
<svg class="abs" style="left:130px;top:733px" width="16" height="18" viewBox="0 0 16 18"><path d="M1 0 V18 L15.5 9 Z" fill="#8d8d8d"/></svg>
<svg class="abs" style="left:166px;top:729px" width="26" height="28" viewBox="0 0 26 28">
<rect x="3" y="4" width="20" height="20" fill="#efc497" stroke="#ae6a28" stroke-width="2.2"/>
<rect x="4.5" y="5.5" width="17" height="17" fill="none" stroke="#f6d8b4" stroke-width="1"/>
<g fill="#fff4d4"><rect x="5.5" y="7" width="3" height="3"/><rect x="16" y="7" width="3" height="3"/><rect x="5.5" y="17" width="3" height="3"/><rect x="16" y="17" width="3" height="3"/></g>
<rect x="12" y="4" width="2" height="20" fill="#946238"/>
<rect x="3" y="13" width="20" height="2" fill="#946238"/>
<g fill="#3c2412"><rect x="12" y="1" width="2" height="3"/><rect x="12" y="24" width="2" height="3"/><rect x="0" y="13" width="3" height="2"/><rect x="23" y="13" width="3" height="2"/></g>
</svg>
<div class="ui" style="left:205px;top:728px;letter-spacing:1.789px">logging</div>
<svg class="abs" style="left:129px;top:772px" width="18" height="16" viewBox="0 0 18 16"><path d="M0 1 H18 L9 15.5 Z" fill="#8d8d8d"/></svg>
<svg class="abs" style="left:166px;top:767px" width="26" height="28" viewBox="0 0 26 28">
<rect x="3" y="4" width="20" height="20" fill="#efc497" stroke="#ae6a28" stroke-width="2.2"/>
<rect x="4.5" y="5.5" width="17" height="17" fill="none" stroke="#f6d8b4" stroke-width="1"/>
<g fill="#fff4d4"><rect x="5.5" y="7" width="3" height="3"/><rect x="16" y="7" width="3" height="3"/><rect x="5.5" y="17" width="3" height="3"/><rect x="16" y="17" width="3" height="3"/></g>
<rect x="12" y="4" width="2" height="20" fill="#946238"/>
<rect x="3" y="13" width="20" height="2" fill="#946238"/>
<g fill="#3c2412"><rect x="12" y="1" width="2" height="3"/><rect x="12" y="24" width="2" height="3"/><rect x="0" y="13" width="3" height="2"/><rect x="23" y="13" width="3" height="2"/></g>
</svg>
<div class="ui" style="left:205px;top:766px;letter-spacing:0.979px">matcher</div>
<svg class="abs" style="left:170px;top:809px" width="16" height="18" viewBox="0 0 16 18"><path d="M1 0 V18 L15.5 9 Z" fill="#8d8d8d"/></svg>
<svg class="abs" style="left:206px;top:805px" width="26" height="28" viewBox="0 0 26 28">
<rect x="3" y="4" width="20" height="20" fill="#efc497" stroke="#ae6a28" stroke-width="2.2"/>
<rect x="4.5" y="5.5" width="17" height="17" fill="none" stroke="#f6d8b4" stroke-width="1"/>
<g fill="#fff4d4"><rect x="5.5" y="7" width="3" height="3"/><rect x="16" y="7" width="3" height="3"/><rect x="5.5" y="17" width="3" height="3"/><rect x="16" y="17" width="3" height="3"/></g>
<rect x="12" y="4" width="2" height="20" fill="#946238"/>
<rect x="3" y="13" width="20" height="2" fill="#946238"/>
<g fill="#3c2412"><rect x="12" y="1" width="2" height="3"/><rect x="12" y="24" width="2" height="3"/><rect x="0" y="13" width="3" height="2"/><rect x="23" y="13" width="3" height="2"/></g>
</svg>
<div class="ui" style="left:245px;top:804px;letter-spacing:1.169px">indirect</div>
<svg class="abs" style="left:170px;top:847px" width="16" height="18" viewBox="0 0 16 18"><path d="M1 0 V18 L15.5 9 Z" fill="#8d8d8d"/></svg>
<svg class="abs" style="left:204px;top:842px" width="32" height="32" viewBox="0 0 32 32">
<path d="M5 3 H19 L25 9 V29 H5 Z" fill="#fbfbff" stroke="#8a7b3e" stroke-width="2"/>
<path d="M18.5 3.5 V9.5 H24.5" fill="#ead08a" stroke="#d2b060" stroke-width="1.2"/>
<rect x="6" y="0" width="4" height="13" fill="#2e6ea8"/>
<rect x="2" y="10" width="7" height="4" fill="#3a7ab0"/>
<rect x="4" y="1" width="2" height="9" fill="#a8d4f4"/>
<g fill="#0a1850"><rect x="8" y="16" width="5.5" height="10" rx="2"/><rect x="18" y="16" width="2.4" height="10"/><rect x="24" y="16" width="6" height="10" rx="2"/></g>
<g fill="#dfeefe"><rect x="10" y="18" width="1.6" height="6"/><rect x="26.2" y="18" width="1.6" height="6"/></g>
</svg>
<div class="ui" style="left:245px;top:842px;letter-spacing:0.742px">AnnotationInheritanceMatcher.class</div>
<svg class="abs" style="left:170px;top:885px" width="16" height="18" viewBox="0 0 16 18"><path d="M1 0 V18 L15.5 9 Z" fill="#8d8d8d"/></svg>
<svg class="abs" style="left:204px;top:880px" width="32" height="32" viewBox="0 0 32 32">
<path d="M5 3 H19 L25 9 V29 H5 Z" fill="#fbfbff" stroke="#8a7b3e" stroke-width="2"/>
<path d="M18.5 3.5 V9.5 H24.5" fill="#ead08a" stroke="#d2b060" stroke-width="1.2"/>
<rect x="6" y="0" width="4" height="13" fill="#2e6ea8"/>
<rect x="2" y="10" width="7" height="4" fill="#3a7ab0"/>
<rect x="4" y="1" width="2" height="9" fill="#a8d4f4"/>
<g fill="#0a1850"><rect x="8" y="16" width="5.5" height="10" rx="2"/><rect x="18" y="16" width="2.4" height="10"/><rect x="24" y="16" width="6" height="10" rx="2"/></g>
<g fill="#dfeefe"><rect x="10" y="18" width="1.6" height="6"/><rect x="26.2" y="18" width="1.6" height="6"/></g>
</svg>
<div class="ui" style="left:245px;top:880px;letter-spacing:0.446px">ClassMatcher.class</div>
<svg class="abs" style="left:170px;top:923px" width="16" height="18" viewBox="0 0 16 18"><path d="M1 0 V18 L15.5 9 Z" fill="#8d8d8d"/></svg>
<svg class="abs" style="left:204px;top:918px" width="32" height="32" viewBox="0 0 32 32">
<path d="M5 3 H19 L25 9 V29 H5 Z" fill="#fbfbff" stroke="#8a7b3e" stroke-width="2"/>
<path d="M18.5 3.5 V9.5 H24.5" fill="#ead08a" stroke="#d2b060" stroke-width="1.2"/>
<rect x="6" y="0" width="4" height="13" fill="#2e6ea8"/>
<rect x="2" y="10" width="7" height="4" fill="#3a7ab0"/>
<rect x="4" y="1" width="2" height="9" fill="#a8d4f4"/>
<g fill="#0a1850"><rect x="8" y="16" width="5.5" height="10" rx="2"/><rect x="18" y="16" width="2.4" height="10"/><rect x="24" y="16" width="6" height="10" rx="2"/></g>
<g fill="#dfeefe"><rect x="10" y="18" width="1.6" height="6"/><rect x="26.2" y="18" width="1.6" height="6"/></g>
</svg>
<div class="ui" style="left:245px;top:918px;letter-spacing:0.465px">NameMatcher.class</div>
<svg class="abs" style="left:170px;top:961px" width="16" height="18" viewBox="0 0 16 18"><path d="M1 0 V18 L15.5 9 Z" fill="#8d8d8d"/></svg>
<svg class="abs" style="left:204px;top:956px" width="32" height="32" viewBox="0 0 32 32">
<path d="M5 3 H19 L25 9 V29 H5 Z" fill="#fbfbff" stroke="#8a7b3e" stroke-width="2"/>
<path d="M18.5 3.5 V9.5 H24.5" fill="#ead08a" stroke="#d2b060" stroke-width="1.2"/>
<rect x="6" y="0" width="4" height="13" fill="#2e6ea8"/>
<rect x="2" y="10" width="7" height="4" fill="#3a7ab0"/>
<rect x="4" y="1" width="2" height="9" fill="#a8d4f4"/>
<g fill="#0a1850"><rect x="8" y="16" width="5.5" height="10" rx="2"/><rect x="18" y="16" width="2.4" height="10"/><rect x="24" y="16" width="6" height="10" rx="2"/></g>
<g fill="#dfeefe"><rect x="10" y="18" width="1.6" height="6"/><rect x="26.2" y="18" width="1.6" height="6"/></g>
</svg>
<div class="ui" style="left:245px;top:956px;letter-spacing:0.474px">ProtectiveMatcher.class</div>
<svg class="abs" style="left:129px;top:1000px" width="18" height="16" viewBox="0 0 18 16"><path d="M0 1 H18 L9 15.5 Z" fill="#8d8d8d"/></svg>
<svg class="abs" style="left:166px;top:995px" width="26" height="28" viewBox="0 0 26 28">
<rect x="3" y="4" width="20" height="20" fill="#efc497" stroke="#ae6a28" stroke-width="2.2"/>
<rect x="4.5" y="5.5" width="17" height="17" fill="none" stroke="#f6d8b4" stroke-width="1"/>
<g fill="#fff4d4"><rect x="5.5" y="7" width="3" height="3"/><rect x="16" y="7" width="3" height="3"/><rect x="5.5" y="17" width="3" height="3"/><rect x="16" y="17" width="3" height="3"/></g>
<rect x="12" y="4" width="2" height="20" fill="#946238"/>
<rect x="3" y="13" width="20" height="2" fill="#946238"/>
<g fill="#3c2412"><rect x="12" y="1" width="2" height="3"/><rect x="12" y="24" width="2" height="3"/><rect x="0" y="13" width="3" height="2"/><rect x="23" y="13" width="3" height="2"/></g>
</svg>
<div class="ui" style="left:205px;top:994px;letter-spacing:2.256px">plugin</div>
<svg class="abs" style="left:169px;top:1038px" width="18" height="16" viewBox="0 0 18 16"><path d="M0 1 H18 L9 15.5 Z" fill="#8d8d8d"/></svg>
<svg class="abs" style="left:206px;top:1033px" width="26" height="28" viewBox="0 0 26 28">
<rect x="3" y="4" width="20" height="20" fill="#efc497" stroke="#ae6a28" stroke-width="2.2"/>
<rect x="4.5" y="5.5" width="17" height="17" fill="none" stroke="#f6d8b4" stroke-width="1"/>
<g fill="#fff4d4"><rect x="5.5" y="7" width="3" height="3"/><rect x="16" y="7" width="3" height="3"/><rect x="5.5" y="17" width="3" height="3"/><rect x="16" y="17" width="3" height="3"/></g>
<rect x="12" y="4" width="2" height="20" fill="#946238"/>
<rect x="3" y="13" width="20" height="2" fill="#946238"/>
<g fill="#3c2412"><rect x="12" y="1" width="2" height="3"/><rect x="12" y="24" width="2" height="3"/><rect x="0" y="13" width="3" height="2"/><rect x="23" y="13" width="3" height="2"/></g>
</svg>
<div class="ui" style="left:245px;top:1032px;letter-spacing:1.259px">Instrumentation</div>
<svg class="abs" style="left:210px;top:1075px" width="16" height="18" viewBox="0 0 16 18"><path d="M1 0 V18 L15.5 9 Z" fill="#8d8d8d"/></svg>
<svg class="abs" style="left:244px;top:1070px" width="32" height="32" viewBox="0 0 32 32">
<path d="M5 3 H19 L25 9 V29 H5 Z" fill="#fbfbff" stroke="#8a7b3e" stroke-width="2"/>
<path d="M18.5 3.5 V9.5 H24.5" fill="#ead08a" stroke="#d2b060" stroke-width="1.2"/>
<rect x="6" y="0" width="4" height="13" fill="#2e6ea8"/>
<rect x="2" y="10" width="7" height="4" fill="#3a7ab0"/>
<rect x="4" y="1" width="2" height="9" fill="#a8d4f4"/>
<g fill="#0a1850"><rect x="8" y="16" width="5.5" height="10" rx="2"/><rect x="18" y="16" width="2.4" height="10"/><rect x="24" y="16" width="6" height="10" rx="2"/></g>
<g fill="#dfeefe"><rect x="10" y="18" width="1.6" height="6"/><rect x="26.2" y="18" width="1.6" height="6"/></g>
</svg>
<div class="ui" style="left:285px;top:1070px;letter-spacing:0.344px">AbstractEnhancePlugin.class</div>
<svg class="abs" style="left:210px;top:1113px" width="16" height="18" viewBox="0 0 16 18"><path d="M1 0 V18 L15.5 9 Z" fill="#8d8d8d"/></svg>
<svg class="abs" style="left:244px;top:1108px" width="32" height="32" viewBox="0 0 32 32">
<path d="M5 3 H19 L25 9 V29 H5 Z" fill="#fbfbff" stroke="#8a7b3e" stroke-width="2"/>
<path d="M18.5 3.5 V9.5 H24.5" fill="#ead08a" stroke="#d2b060" stroke-width="1.2"/>
<rect x="6" y="0" width="4" height="13" fill="#2e6ea8"/>
<rect x="2" y="10" width="7" height="4" fill="#3a7ab0"/>
<rect x="4" y="1" width="2" height="9" fill="#a8d4f4"/>
<g fill="#0a1850"><rect x="8" y="16" width="5.5" height="10" rx="2"/><rect x="18" y="16" width="2.4" height="10"/><rect x="24" y="16" width="6" height="10" rx="2"/></g>
<g fill="#dfeefe"><rect x="10" y="18" width="1.6" height="6"/><rect x="26.2" y="18" width="1.6" height="6"/></g>
</svg>
<div class="ui" style="left:285px;top:1108px;letter-spacing:0.342px">ClassFinder.class</div>
<svg class="abs" style="left:210px;top:1151px" width="16" height="18" viewBox="0 0 16 18"><path d="M1 0 V18 L15.5 9 Z" fill="#8d8d8d"/></svg>
<svg class="abs" style="left:244px;top:1146px" width="32" height="32" viewBox="0 0 32 32">
<path d="M5 3 H19 L25 9 V29 H5 Z" fill="#fbfbff" stroke="#8a7b3e" stroke-width="2"/>
<path d="M18.5 3.5 V9.5 H24.5" fill="#ead08a" stroke="#d2b060" stroke-width="1.2"/>
<rect x="6" y="0" width="4" height="13" fill="#2e6ea8"/>
<rect x="2" y="10" width="7" height="4" fill="#3a7ab0"/>
<rect x="4" y="1" width="2" height="9" fill="#a8d4f4"/>
<g fill="#0a1850"><rect x="8" y="16" width="5.5" height="10" rx="2"/><rect x="18" y="16" width="2.4" height="10"/><rect x="24" y="16" width="6" height="10" rx="2"/></g>
<g fill="#dfeefe"><rect x="10" y="18" width="1.6" height="6"/><rect x="26.2" y="18" width="1.6" height="6"/></g>
</svg>
<div class="ui" style="left:285px;top:1146px;letter-spacing:0.062px">EnhanceFlag.class</div>
<svg class="abs" style="left:210px;top:1189px" width="16" height="18" viewBox="0 0 16 18"><path d="M1 0 V18 L15.5 9 Z" fill="#8d8d8d"/></svg>
<svg class="abs" style="left:244px;top:1184px" width="32" height="32" viewBox="0 0 32 32">
<path d="M5 3 H19 L25 9 V29 H5 Z" fill="#fbfbff" stroke="#8a7b3e" stroke-width="2"/>
<path d="M18.5 3.5 V9.5 H24.5" fill="#ead08a" stroke="#d2b060" stroke-width="1.2"/>
<rect x="6" y="0" width="4" height="13" fill="#2e6ea8"/>
<rect x="2" y="10" width="7" height="4" fill="#3a7ab0"/>
<rect x="4" y="1" width="2" height="9" fill="#a8d4f4"/>
<g fill="#0a1850"><rect x="8" y="16" width="5.5" height="10" rx="2"/><rect x="18" y="16" width="2.4" height="10"/><rect x="24" y="16" width="6" height="10" rx="2"/></g>
<g fill="#dfeefe"><rect x="10" y="18" width="1.6" height="6"/><rect x="26.2" y="18" width="1.6" height="6"/></g>
</svg>
<div class="ui" style="left:285px;top:1184px;letter-spacing:0.241px">EnhancedInstance.class</div>
<svg class="abs" style="left:210px;top:1227px" width="16" height="18" viewBox="0 0 16 18"><path d="M1 0 V18 L15.5 9 Z" fill="#8d8d8d"/></svg>
<svg class="abs" style="left:244px;top:1222px" width="32" height="32" viewBox="0 0 32 32">
<path d="M5 3 H19 L25 9 V29 H5 Z" fill="#fbfbff" stroke="#8a7b3e" stroke-width="2"/>
<path d="M18.5 3.5 V9.5 H24.5" fill="#ead08a" stroke="#d2b060" stroke-width="1.2"/>
<rect x="6" y="0" width="4" height="13" fill="#2e6ea8"/>
<rect x="2" y="10" width="7" height="4" fill="#3a7ab0"/>
<rect x="4" y="1" width="2" height="9" fill="#a8d4f4"/>
<g fill="#0a1850"><rect x="8" y="16" width="5.5" height="10" rx="2"/><rect x="18" y="16" width="2.4" height="10"/><rect x="24" y="16" width="6" height="10" rx="2"/></g>
<g fill="#dfeefe"><rect x="10" y="18" width="1.6" height="6"/><rect x="26.2" y="18" width="1.6" height="6"/></g>
</svg>
<div class="ui" style="left:285px;top:1222px;letter-spacing:0.435px">InstanceAbstractEnhancePlugin.class</div>
<svg class="abs" style="left:210px;top:1265px" width="16" height="18" viewBox="0 0 16 18"><path d="M1 0 V18 L15.5 9 Z" fill="#8d8d8d"/></svg>
<svg class="abs" style="left:244px;top:1260px" width="32" height="32" viewBox="0 0 32 32">
<path d="M5 3 H19 L25 9 V29 H5 Z" fill="#fbfbff" stroke="#8a7b3e" stroke-width="2"/>
<path d="M18.5 3.5 V9.5 H24.5" fill="#ead08a" stroke="#d2b060" stroke-width="1.2"/>
<rect x="6" y="0" width="4" height="13" fill="#2e6ea8"/>
<rect x="2" y="10" width="7" height="4" fill="#3a7ab0"/>
<rect x="4" y="1" width="2" height="9" fill="#a8d4f4"/>
<g fill="#0a1850"><rect x="8" y="16" width="5.5" height="10" rx="2"/><rect x="18" y="16" width="2.4" height="10"/><rect x="24" y="16" width="6" height="10" rx="2"/></g>
<g fill="#dfeefe"><rect x="10" y="18" width="1.6" height="6"/><rect x="26.2" y="18" width="1.6" height="6"/></g>
</svg>
<div class="ui" style="left:285px;top:1260px;letter-spacing:0.369px">StaticAbstractEnhancePlugin.class</div>
<svg class="abs" style="left:170px;top:1303px" width="16" height="18" viewBox="0 0 16 18"><path d="M1 0 V18 L15.5 9 Z" fill="#8d8d8d"/></svg>
<svg class="abs" style="left:206px;top:1299px" width="26" height="28" viewBox="0 0 26 28">
<rect x="3" y="4" width="20" height="20" fill="#efc497" stroke="#ae6a28" stroke-width="2.2"/>
<rect x="4.5" y="5.5" width="17" height="17" fill="none" stroke="#f6d8b4" stroke-width="1"/>
<g fill="#fff4d4"><rect x="5.5" y="7" width="3" height="3"/><rect x="16" y="7" width="3" height="3"/><rect x="5.5" y="17" width="3" height="3"/><rect x="16" y="17" width="3" height="3"/></g>
<rect x="12" y="4" width="2" height="20" fill="#946238"/>
<rect x="3" y="13" width="20" height="2" fill="#946238"/>
<g fill="#3c2412"><rect x="12" y="1" width="2" height="3"/><rect x="12" y="24" width="2" height="3"/><rect x="0" y="13" width="3" height="2"/><rect x="23" y="13" width="3" height="2"/></g>
</svg>
<div class="ui" style="left:245px;top:1298px;letter-spacing:0.836px">Runtime</div>
<svg class="abs" style="left:170px;top:1341px" width="16" height="18" viewBox="0 0 16 18"><path d="M1 0 V18 L15.5 9 Z" fill="#8d8d8d"/></svg>
<svg class="abs" style="left:206px;top:1337px" width="26" height="28" viewBox="0 0 26 28">
<rect x="3" y="4" width="20" height="20" fill="#efc497" stroke="#ae6a28" stroke-width="2.2"/>
<rect x="4.5" y="5.5" width="17" height="17" fill="none" stroke="#f6d8b4" stroke-width="1"/>
<g fill="#fff4d4"><rect x="5.5" y="7" width="3" height="3"/><rect x="16" y="7" width="3" height="3"/><rect x="5.5" y="17" width="3" height="3"/><rect x="16" y="17" width="3" height="3"/></g>
<rect x="12" y="4" width="2" height="20" fill="#946238"/>
<rect x="3" y="13" width="20" height="2" fill="#946238"/>
<g fill="#3c2412"><rect x="12" y="1" width="2" height="3"/><rect x="12" y="24" width="2" height="3"/><rect x="0" y="13" width="3" height="2"/><rect x="23" y="13" width="3" height="2"/></g>
</svg>
<div class="ui" style="left:245px;top:1336px;letter-spacing:1.614px">pointcuts</div>
<svg class="abs" style="left:170px;top:1379px" width="16" height="18" viewBox="0 0 16 18"><path d="M1 0 V18 L15.5 9 Z" fill="#8d8d8d"/></svg>
<svg class="abs" style="left:204px;top:1374px" width="32" height="32" viewBox="0 0 32 32">
<path d="M5 3 H19 L25 9 V29 H5 Z" fill="#fbfbff" stroke="#8a7b3e" stroke-width="2"/>
<path d="M18.5 3.5 V9.5 H24.5" fill="#ead08a" stroke="#d2b060" stroke-width="1.2"/>
<rect x="6" y="0" width="4" height="13" fill="#2e6ea8"/>
<rect x="2" y="10" width="7" height="4" fill="#3a7ab0"/>
<rect x="4" y="1" width="2" height="9" fill="#a8d4f4"/>
<g fill="#0a1850"><rect x="8" y="16" width="5.5" height="10" rx="2"/><rect x="18" y="16" width="2.4" height="10"/><rect x="24" y="16" width="6" height="10" rx="2"/></g>
<g fill="#dfeefe"><rect x="10" y="18" width="1.6" height="6"/><rect x="26.2" y="18" width="1.6" height="6"/></g>
</svg>
<div class="ui" style="left:245px;top:1374px;letter-spacing:0.604px">PluginDefine.class</div>
<svg class="abs" style="left:170px;top:1417px" width="16" height="18" viewBox="0 0 16 18"><path d="M1 0 V18 L15.5 9 Z" fill="#8d8d8d"/></svg>
<svg class="abs" style="left:204px;top:1412px" width="32" height="32" viewBox="0 0 32 32">
<path d="M5 3 H19 L25 9 V29 H5 Z" fill="#fbfbff" stroke="#8a7b3e" stroke-width="2"/>
<path d="M18.5 3.5 V9.5 H24.5" fill="#ead08a" stroke="#d2b060" stroke-width="1.2"/>
<rect x="6" y="0" width="4" height="13" fill="#2e6ea8"/>
<rect x="2" y="10" width="7" height="4" fill="#3a7ab0"/>
<rect x="4" y="1" width="2" height="9" fill="#a8d4f4"/>
<g fill="#0a1850"><rect x="8" y="16" width="5.5" height="10" rx="2"/><rect x="18" y="16" width="2.4" height="10"/><rect x="24" y="16" width="6" height="10" rx="2"/></g>
<g fill="#dfeefe"><rect x="10" y="18" width="1.6" height="6"/><rect x="26.2" y="18" width="1.6" height="6"/></g>
</svg>
<div class="ui" style="left:245px;top:1412px;letter-spacing:0.419px">PluginLoader.class</div>
<svg class="abs" style="left:170px;top:1455px" width="16" height="18" viewBox="0 0 16 18"><path d="M1 0 V18 L15.5 9 Z" fill="#8d8d8d"/></svg>
<svg class="abs" style="left:204px;top:1450px" width="32" height="32" viewBox="0 0 32 32">
<path d="M5 3 H19 L25 9 V29 H5 Z" fill="#fbfbff" stroke="#8a7b3e" stroke-width="2"/>
<path d="M18.5 3.5 V9.5 H24.5" fill="#ead08a" stroke="#d2b060" stroke-width="1.2"/>
<rect x="6" y="0" width="4" height="13" fill="#2e6ea8"/>
<rect x="2" y="10" width="7" height="4" fill="#3a7ab0"/>
<rect x="4" y="1" width="2" height="9" fill="#a8d4f4"/>
<g fill="#0a1850"><rect x="8" y="16" width="5.5" height="10" rx="2"/><rect x="18" y="16" width="2.4" height="10"/><rect x="24" y="16" width="6" height="10" rx="2"/></g>
<g fill="#dfeefe"><rect x="10" y="18" width="1.6" height="6"/><rect x="26.2" y="18" width="1.6" height="6"/></g>
</svg>
<div class="ui" style="left:245px;top:1450px;letter-spacing:0.653px">PluginCache.class</div>
</div>
<div class="abs" style="left:890px;top:884px;width:18px;height:18px;background:#f4f4f5"></div>
<div class="abs" style="left:893px;top:887px;width:12px;height:12px;border-radius:50%;background:radial-gradient(circle at 50% 40%,#d8d8da,#bdbdc0)"></div>
<div class="abs" style="left:924px;top:196px;width:1915px;height:1403px;background:#e3e4e6;border:1px solid #d2d3d5;border-radius:9px"></div>
<div class="abs" style="left:931px;top:172px;width:1903px;height:40px;background:#fff;border:1px solid #c4c4c6;border-radius:8px;box-shadow:0 1px 0 #d0d0d2"></div>
<div class="abs" style="left:978px;top:173px;width:1px;height:38px;background:#d8d8da"></div>
<div class="abs" style="left:1400px;top:173px;width:1px;height:38px;background:#d8d8da"></div>
<div class="abs" style="left:1858px;top:173px;width:1px;height:38px;background:#d8d8da"></div>
<div class="abs" style="left:2378px;top:172px;width:455px;height:40px;background:linear-gradient(#6aaaf9,#3a8ef8 50%,#1b7af5);border:1px solid #2a74d8;border-left:none;border-radius:0 8px 8px 0"></div>
<svg class="abs" style="left:944px;top:182px" width="19" height="20" viewBox="0 0 19 20"><path d="M0.5 10 L18 0.5 V19.5 Z" fill="#000"/></svg>
<svg class="abs" style="left:1003px;top:176px" width="32" height="32" viewBox="0 0 32 32">
<path d="M5 3 H19 L25 9 V29 H5 Z" fill="#fbfbff" stroke="#8a7b3e" stroke-width="2"/>
<path d="M18.5 3.5 V9.5 H24.5" fill="#ead08a" stroke="#d2b060" stroke-width="1.2"/>
<rect x="6" y="0" width="4" height="13" fill="#2e6ea8"/>
<rect x="2" y="10" width="7" height="4" fill="#3a7ab0"/>
<rect x="4" y="1" width="2" height="9" fill="#a8d4f4"/>
<g fill="#0a1850"><rect x="8" y="16" width="5.5" height="10" rx="2"/><rect x="18" y="16" width="2.4" height="10"/><rect x="24" y="16" width="6" height="10" rx="2"/></g>
<g fill="#dfeefe"><rect x="10" y="18" width="1.6" height="6"/><rect x="26.2" y="18" width="1.6" height="6"/></g>
</svg>
<div class="ui" style="left:1040.0px;top:178px;letter-spacing:0.639px;color:#000">TraceContext.class</div>
<svg class="abs" style="left:1358px;top:182px" width="20" height="20" viewBox="0 0 20 20" shape-rendering="crispEdges"><g fill="#5c5c5c"><rect x="0" y="0" width="2" height="2"/><rect x="0" y="2" width="2" height="2"/><rect x="0" y="4" width="2" height="2"/><rect x="0" y="14" width="2" height="2"/><rect x="0" y="16" width="2" height="2"/><rect x="0" y="18" width="2" height="2"/><rect x="2" y="0" width="2" height="2"/><rect x="2" y="6" width="2" height="2"/><rect x="2" y="12" width="2" height="2"/><rect x="2" y="18" width="2" height="2"/><rect x="4" y="0" width="2" height="2"/><rect x="4" y="8" width="2" height="2"/><rect x="4" y="10" width="2" height="2"/><rect x="4" y="18" width="2" height="2"/><rect x="6" y="2" width="2" height="2"/><rect x="6" y="16" width="2" height="2"/><rect x="8" y="4" width="2" height="2"/><rect x="8" y="14" width="2" height="2"/><rect x="10" y="4" width="2" height="2"/><rect x="10" y="14" width="2" height="2"/><rect x="12" y="2" width="2" height="2"/><rect x="12" y="16" width="2" height="2"/><rect x="14" y="0" width="2" height="2"/><rect x="14" y="8" width="2" height="2"/><rect x="14" y="10" width="2" height="2"/><rect x="14" y="18" width="2" height="2"/><rect x="16" y="0" width="2" height="2"/><rect x="16" y="6" width="2" height="2"/><rect x="16" y="12" width="2" height="2"/><rect x="16" y="18" width="2" height="2"/><rect x="18" y="0" width="2" height="2"/><rect x="18" y="2" width="2" height="2"/><rect x="18" y="4" width="2" height="2"/><rect x="18" y="14" width="2" height="2"/><rect x="18" y="16" width="2" height="2"/><rect x="18" y="18" width="2" height="2"/></g></svg>
<svg class="abs" style="left:1425px;top:176px" width="32" height="32" viewBox="0 0 32 32">
<path d="M5 3 H19 L25 9 V29 H5 Z" fill="#fbfbff" stroke="#8a7b3e" stroke-width="2"/>
<path d="M18.5 3.5 V9.5 H24.5" fill="#ead08a" stroke="#d2b060" stroke-width="1.2"/>
<rect x="6" y="0" width="4" height="13" fill="#2e6ea8"/>
<rect x="2" y="10" width="7" height="4" fill="#3a7ab0"/>
<rect x="4" y="1" width="2" height="9" fill="#a8d4f4"/>
<g fill="#0a1850"><rect x="8" y="16" width="5.5" height="10" rx="2"/><rect x="18" y="16" width="2.4" height="10"/><rect x="24" y="16" width="6" height="10" rx="2"/></g>
<g fill="#dfeefe"><rect x="10" y="18" width="1.6" height="6"/><rect x="26.2" y="18" width="1.6" height="6"/></g>
</svg>
<div class="ui" style="left:1462.7px;top:178px;letter-spacing:0.715px;color:#000">RuntimeContext.class</div>
<svg class="abs" style="left:1816px;top:182px" width="20" height="20" viewBox="0 0 20 20" shape-rendering="crispEdges"><g fill="#5c5c5c"><rect x="0" y="0" width="2" height="2"/><rect x="0" y="2" width="2" height="2"/><rect x="0" y="4" width="2" height="2"/><rect x="0" y="14" width="2" height="2"/><rect x="0" y="16" width="2" height="2"/><rect x="0" y="18" width="2" height="2"/><rect x="2" y="0" width="2" height="2"/><rect x="2" y="6" width="2" height="2"/><rect x="2" y="12" width="2" height="2"/><rect x="2" y="18" width="2" height="2"/><rect x="4" y="0" width="2" height="2"/><rect x="4" y="8" width="2" height="2"/><rect x="4" y="10" width="2" height="2"/><rect x="4" y="18" width="2" height="2"/><rect x="6" y="2" width="2" height="2"/><rect x="6" y="16" width="2" height="2"/><rect x="8" y="4" width="2" height="2"/><rect x="8" y="14" width="2" height="2"/><rect x="10" y="4" width="2" height="2"/><rect x="10" y="14" width="2" height="2"/><rect x="12" y="2" width="2" height="2"/><rect x="12" y="16" width="2" height="2"/><rect x="14" y="0" width="2" height="2"/><rect x="14" y="8" width="2" height="2"/><rect x="14" y="10" width="2" height="2"/><rect x="14" y="18" width="2" height="2"/><rect x="16" y="0" width="2" height="2"/><rect x="16" y="6" width="2" height="2"/><rect x="16" y="12" width="2" height="2"/><rect x="16" y="18" width="2" height="2"/><rect x="18" y="0" width="2" height="2"/><rect x="18" y="2" width="2" height="2"/><rect x="18" y="4" width="2" height="2"/><rect x="18" y="14" width="2" height="2"/><rect x="18" y="16" width="2" height="2"/><rect x="18" y="18" width="2" height="2"/></g></svg>
<svg class="abs" style="left:1883px;top:176px" width="32" height="32" viewBox="0 0 32 32">
<path d="M5 3 H19 L25 9 V29 H5 Z" fill="#fbfbff" stroke="#8a7b3e" stroke-width="2"/>
<path d="M18.5 3.5 V9.5 H24.5" fill="#ead08a" stroke="#d2b060" stroke-width="1.2"/>
<rect x="6" y="0" width="4" height="13" fill="#2e6ea8"/>
<rect x="2" y="10" width="7" height="4" fill="#3a7ab0"/>
<rect x="4" y="1" width="2" height="9" fill="#a8d4f4"/>
<g fill="#0a1850"><rect x="8" y="16" width="5.5" height="10" rx="2"/><rect x="18" y="16" width="2.4" height="10"/><rect x="24" y="16" width="6" height="10" rx="2"/></g>
<g fill="#dfeefe"><rect x="10" y="18" width="1.6" height="6"/><rect x="26.2" y="18" width="1.6" height="6"/></g>
</svg>
<div class="ui" style="left:1921.0px;top:178px;letter-spacing:0.582px;color:#000">IgnoredTraceContext.class</div>
<svg class="abs" style="left:2334px;top:182px" width="20" height="20" viewBox="0 0 20 20" shape-rendering="crispEdges"><g fill="#5c5c5c"><rect x="0" y="0" width="2" height="2"/><rect x="0" y="2" width="2" height="2"/><rect x="0" y="4" width="2" height="2"/><rect x="0" y="14" width="2" height="2"/><rect x="0" y="16" width="2" height="2"/><rect x="0" y="18" width="2" height="2"/><rect x="2" y="0" width="2" height="2"/><rect x="2" y="6" width="2" height="2"/><rect x="2" y="12" width="2" height="2"/><rect x="2" y="18" width="2" height="2"/><rect x="4" y="0" width="2" height="2"/><rect x="4" y="8" width="2" height="2"/><rect x="4" y="10" width="2" height="2"/><rect x="4" y="18" width="2" height="2"/><rect x="6" y="2" width="2" height="2"/><rect x="6" y="16" width="2" height="2"/><rect x="8" y="4" width="2" height="2"/><rect x="8" y="14" width="2" height="2"/><rect x="10" y="4" width="2" height="2"/><rect x="10" y="14" width="2" height="2"/><rect x="12" y="2" width="2" height="2"/><rect x="12" y="16" width="2" height="2"/><rect x="14" y="0" width="2" height="2"/><rect x="14" y="8" width="2" height="2"/><rect x="14" y="10" width="2" height="2"/><rect x="14" y="18" width="2" height="2"/><rect x="16" y="0" width="2" height="2"/><rect x="16" y="6" width="2" height="2"/><rect x="16" y="12" width="2" height="2"/><rect x="16" y="18" width="2" height="2"/><rect x="18" y="0" width="2" height="2"/><rect x="18" y="2" width="2" height="2"/><rect x="18" y="4" width="2" height="2"/><rect x="18" y="14" width="2" height="2"/><rect x="18" y="16" width="2" height="2"/><rect x="18" y="18" width="2" height="2"/></g></svg>
<svg class="abs" style="left:2396px;top:176px" width="32" height="32" viewBox="0 0 32 32">
<path d="M5 3 H19 L25 9 V29 H5 Z" fill="#fbfbff" stroke="#8a7b3e" stroke-width="2"/>
<path d="M18.5 3.5 V9.5 H24.5" fill="#ead08a" stroke="#d2b060" stroke-width="1.2"/>
<rect x="6" y="0" width="4" height="13" fill="#2e6ea8"/>
<rect x="2" y="10" width="7" height="4" fill="#3a7ab0"/>
<rect x="4" y="1" width="2" height="9" fill="#a8d4f4"/>
<g fill="#0a1850"><rect x="8" y="16" width="5.5" height="10" rx="2"/><rect x="18" y="16" width="2.4" height="10"/><rect x="24" y="16" width="6" height="10" rx="2"/></g>
<g fill="#dfeefe"><rect x="10" y="18" width="1.6" height="6"/><rect x="26.2" y="18" width="1.6" height="6"/></g>
</svg>
<div class="ui" style="left:2436.8px;top:178px;letter-spacing:0.563px;color:#0a1530">ContextManager.class</div>
<svg class="abs" style="left:2792px;top:182px" width="20" height="20" viewBox="0 0 20 20"><g transform="translate(10 10) scale(0.82) translate(-10 -10)"><path d="M0 0 L6 0 L6 2 L8 2 L8 4 L12 4 L12 2 L14 2 L14 0 L20 0 L20 6 L18 6 L18 8 L16 8 L16 12 L18 12 L18 14 L20 14 L20 20 L14 20 L14 18 L12 18 L12 16 L8 16 L8 18 L6 18 L6 20 L0 20 L0 14 L2 14 L2 12 L4 12 L4 8 L2 8 L2 6 L0 6 Z" fill="#1e2a40" fill-opacity="0.55" stroke="#1e2a40" stroke-opacity="0.55" stroke-width="2.4" transform="translate(0.3 0.6)"/><path d="M0 0 L6 0 L6 2 L8 2 L8 4 L12 4 L12 2 L14 2 L14 0 L20 0 L20 6 L18 6 L18 8 L16 8 L16 12 L18 12 L18 14 L20 14 L20 20 L14 20 L14 18 L12 18 L12 16 L8 16 L8 18 L6 18 L6 20 L0 20 L0 14 L2 14 L2 12 L4 12 L4 8 L2 8 L2 6 L0 6 Z" fill="#ffffff"/></g></svg>
<div class="abs" style="left:2809px;top:231px;width:27px;height:1363px;background:#edeef0"></div>
<div class="abs" style="left:2808px;top:387px;width:28px;height:3px;background:#8cbcf4"></div>
<div class="abs" style="left:931px;top:1594px;width:1877px;height:2px;background:#fff"></div><div class="abs" style="left:931px;top:230px;width:1877px;height:1364px;border:2px solid #8a8a8c;border-top-color:#5c5c5e;background:#fff;overflow:hidden">
<div class="abs" style="left:87px;top:0;width:1px;height:1400px;background:#d4d4d6"></div>
<div class="abs" style="left:88px;top:512px;width:1753px;height:30px;background:#e8f2fe"></div>
<div class="abs" style="left:1841px;top:0;width:33px;height:1400px;background:#f8f9fa;border-left:1px solid #e6e6e8"></div>
<div class="abs" style="left:1849px;top:4px;width:16px;height:410px;background:#c2c2c5;border-radius:8px"></div>
<div class="code" style="left:88px;top:4px"><span class="k">package</span> com.tencent.cloud.tsw.agent.core.context;</div>
<svg class="abs" style="left:67px;top:68px" width="18" height="18" viewBox="0 0 18 18">
<defs><radialGradient id="fg" cx="50%" cy="35%" r="60%"><stop offset="0" stop-color="#e4f2fc"/><stop offset="1" stop-color="#b4cadc"/></radialGradient></defs>
<circle cx="9" cy="9" r="8" fill="url(#fg)" stroke="#a5b4c2" stroke-width="1.2"/>
<rect x="4" y="8" width="10" height="2.2" fill="#0c1c30"/></svg>
<div class="code" style="left:88px;top:64px"><span class="k">import</span> <span class="u">com.tencent.cloud.tsw.agent.base.entity.Span</span>;</div>
<div class="code" style="left:88px;top:94px"><span class="k">import</span> <span class="u">com.tencent.cloud.tsw.agent.core.bootstrap.ServiceBootStrap</span>;</div>
<div class="code" style="left:88px;top:124px"><span class="k">import</span> <span class="u">com.tencent.cloud.tsw.agent.core.conf.AgentConf</span>;</div>
<div class="code" style="left:88px;top:154px"><span class="k">import</span> <span class="u">com.tencent.cloud.tsw.agent.core.context.HeaderUtils.HeaderAccessor</span>;</div>
<div class="code" style="left:88px;top:184px"><span class="k">import</span> <span class="u">com.tencent.cloud.tsw.agent.core.logging.api.ILog</span>;</div>
<div class="code" style="left:88px;top:214px"><span class="k">import</span> <span class="u">com.tencent.cloud.tsw.agent.core.logging.api.LoggerFactory</span>;</div>
<div class="code" style="left:88px;top:244px"><span class="k">import</span> <span class="u">com.tencent.cloud.tsw.agent.core.utils.StringUtil</span>;</div>
<svg class="abs" style="left:67px;top:308px" width="18" height="18" viewBox="0 0 18 18">
<defs><radialGradient id="fg" cx="50%" cy="35%" r="60%"><stop offset="0" stop-color="#e4f2fc"/><stop offset="1" stop-color="#b4cadc"/></radialGradient></defs>
<circle cx="9" cy="9" r="8" fill="url(#fg)" stroke="#a5b4c2" stroke-width="1.2"/>
<rect x="4" y="8" width="10" height="2.2" fill="#0c1c30"/></svg>
<div class="code" style="left:88px;top:304px"><span class="k">public</span> <span class="k">class</span> ContextManager <span class="k">implements</span> <span class="u">ServiceBootStrap</span> {</div>
<div class="ln" style="left:-17px;top:334px">13</div>
<div class="code" style="left:88px;top:334px">  <span class="k">private</span> <span class="k">static</span> <span class="k">final</span> <span class="u">ILog</span> logger = <span class="u">LoggerFactory</span>.<span class="u">getLogger</span>(<span class="u">ContextManager</span>.<span class="k">class</span>);</div>
<div class="ln" style="left:-17px;top:394px">15</div>
<div class="code" style="left:88px;top:394px">  <span class="k">private</span> <span class="k">static</span> ThreadLocal&lt;<span class="u">AbstractTraceContext</span>&gt; CONTEXT = <span class="k">new</span> ThreadLocal&lt;&gt;();</div>
<div class="ln" style="left:-17px;top:454px">17</div>
<div class="code" style="left:88px;top:454px">  <span class="k">private</span> <span class="k">static</span> ThreadLocal&lt;<span class="u">RuntimeContext</span>&gt; RUNTIME_CONTEXT = <span class="k">new</span> ThreadLocal&lt;&gt;();</div>
<svg class="abs" style="left:67px;top:518px" width="18" height="18" viewBox="0 0 18 18">
<defs><radialGradient id="fg" cx="50%" cy="35%" r="60%"><stop offset="0" stop-color="#e4f2fc"/><stop offset="1" stop-color="#b4cadc"/></radialGradient></defs>
<circle cx="9" cy="9" r="8" fill="url(#fg)" stroke="#a5b4c2" stroke-width="1.2"/>
<rect x="4" y="8" width="10" height="2.2" fill="#0c1c30"/></svg>
<div class="code" style="left:88px;top:514px">  <span class="k">private</span> <span class="k">static</span> <span class="u">AbstractTraceContext</span> getOrCreate(String name) {</div>
<div class="ln" style="left:-17px;top:544px">20</div>
<div class="code" style="left:88px;top:544px">    <span class="u">AbstractTraceContext</span> traceContext = <span class="u">CONTEXT</span>.get();</div>
<div class="ln" style="left:-17px;top:574px">22</div>
<svg class="abs" style="left:67px;top:578px" width="18" height="18" viewBox="0 0 18 18">
<defs><radialGradient id="fg" cx="50%" cy="35%" r="60%"><stop offset="0" stop-color="#e4f2fc"/><stop offset="1" stop-color="#b4cadc"/></radialGradient></defs>
<circle cx="9" cy="9" r="8" fill="url(#fg)" stroke="#a5b4c2" stroke-width="1.2"/>
<rect x="4" y="8" width="10" height="2.2" fill="#0c1c30"/></svg>
<div class="code" style="left:88px;top:574px">    <span class="k">if</span> (traceContext == <span class="k">null</span> || !traceContext.<span class="u">isTracing</span>()) {</div>
<div class="ln" style="left:-17px;top:604px">23</div>
<svg class="abs" style="left:67px;top:608px" width="18" height="18" viewBox="0 0 18 18">
<defs><radialGradient id="fg" cx="50%" cy="35%" r="60%"><stop offset="0" stop-color="#e4f2fc"/><stop offset="1" stop-color="#b4cadc"/></radialGradient></defs>
<circle cx="9" cy="9" r="8" fill="url(#fg)" stroke="#a5b4c2" stroke-width="1.2"/>
<rect x="4" y="8" width="10" height="2.2" fill="#0c1c30"/></svg>
<div class="code" style="left:88px;top:604px">      <span class="k">if</span> (<span class="u">StringUtil</span>.<span class="u">isEmpty</span>(name)) {</div>
<div class="ln" style="left:-17px;top:634px">24</div>
<div class="code" style="left:88px;top:634px">        traceContext = <span class="k">new</span> <span class="u">IgnoredTraceContext</span>();</div>
<div class="code" style="left:88px;top:664px">      } <span class="k">else</span> {</div>
<div class="ln" style="left:-17px;top:694px">26</div>
<div class="code" style="left:88px;top:694px">        <span class="k">int</span> index = name.lastIndexOf(<span class="s">"."</span>);</div>
<div class="ln" style="left:-17px;top:724px">27</div>
<svg class="abs" style="left:67px;top:728px" width="18" height="18" viewBox="0 0 18 18">
<defs><radialGradient id="fg" cx="50%" cy="35%" r="60%"><stop offset="0" stop-color="#e4f2fc"/><stop offset="1" stop-color="#b4cadc"/></radialGradient></defs>
<circle cx="9" cy="9" r="8" fill="url(#fg)" stroke="#a5b4c2" stroke-width="1.2"/>
<rect x="4" y="8" width="10" height="2.2" fill="#0c1c30"/></svg>
<div class="code" style="left:88px;top:724px">        <span class="k">if</span> (index &gt; -1 &amp;&amp; <span class="u">AgentConf</span>.<span class="u">Agent</span>.<span class="u">IGNORE_SUFFIX</span>.contains(name.substring(index))) {</div>
<div class="ln" style="left:-17px;top:754px">29</div>
<div class="code" style="left:88px;top:754px">          <span class="u">logger</span>.<span class="u">debug</span>(<span class="s">"create ignoredTraceContext for name:[{}]"</span>, <span class="k">new</span> Object[] { name });</div>
<div class="ln" style="left:-17px;top:784px">30</div>
<div class="code" style="left:88px;top:784px">          traceContext = <span class="k">new</span> <span class="u">IgnoredTraceContext</span>();</div>
<div class="code" style="left:88px;top:814px">        } <span class="k">else</span> {</div>
<div class="ln" style="left:-17px;top:844px">32</div>
<div class="code" style="left:88px;top:844px">          traceContext = <span class="k">new</span> <span class="u">TraceContext</span>();</div>
<div class="code" style="left:88px;top:874px">        }</div>
<div class="code" style="left:88px;top:904px">      }</div>
<div class="ln" style="left:-17px;top:934px">36</div>
<div class="code" style="left:88px;top:934px">      <span class="u">CONTEXT</span>.set(traceContext);</div>
<div class="code" style="left:88px;top:964px">    }</div>
<div class="ln" style="left:-17px;top:994px">39</div>
<div class="code" style="left:88px;top:994px">    <span class="k">return</span> traceContext;</div>
<div class="abs" style="left:116px;top:1021px;width:16px;height:30px;border:2px solid #c2c2c4"></div>
<div class="code" style="left:88px;top:1024px">  }</div>
<svg class="abs" style="left:67px;top:1088px" width="18" height="18" viewBox="0 0 18 18">
<defs><radialGradient id="fg" cx="50%" cy="35%" r="60%"><stop offset="0" stop-color="#e4f2fc"/><stop offset="1" stop-color="#b4cadc"/></radialGradient></defs>
<circle cx="9" cy="9" r="8" fill="url(#fg)" stroke="#a5b4c2" stroke-width="1.2"/>
<rect x="4" y="8" width="10" height="2.2" fill="#0c1c30"/></svg>
<div class="code" style="left:88px;top:1084px">  <span class="k">public</span> <span class="k">static</span> <span class="u">RuntimeContext</span> getRuntimeContext() {</div>
<div class="ln" style="left:-17px;top:1114px">43</div>
<div class="code" style="left:88px;top:1114px">    <span class="u">RuntimeContext</span> context = <span class="u">RUNTIME_CONTEXT</span>.get();</div>
<div class="ln" style="left:-17px;top:1144px">44</div>
<svg class="abs" style="left:67px;top:1148px" width="18" height="18" viewBox="0 0 18 18">
<defs><radialGradient id="fg" cx="50%" cy="35%" r="60%"><stop offset="0" stop-color="#e4f2fc"/><stop offset="1" stop-color="#b4cadc"/></radialGradient></defs>
<circle cx="9" cy="9" r="8" fill="url(#fg)" stroke="#a5b4c2" stroke-width="1.2"/>
<rect x="4" y="8" width="10" height="2.2" fill="#0c1c30"/></svg>
<div class="code" style="left:88px;top:1144px">    <span class="k">if</span> (context == <span class="k">null</span>) {</div>
<div class="ln" style="left:-17px;top:1174px">45</div>
<div class="code" style="left:88px;top:1174px">      context = <span class="k">new</span> <span class="u">RuntimeContext</span>(<span class="u">RUNTIME_CONTEXT</span>);</div>
<div class="ln" style="left:-17px;top:1204px">46</div>
<div class="code" style="left:88px;top:1204px">      <span class="u">RUNTIME_CONTEXT</span>.set(context);</div>
<div class="code" style="left:88px;top:1234px">    }</div>
<div class="ln" style="left:-17px;top:1264px">49</div>
<div class="code" style="left:88px;top:1264px">    <span class="k">return</span> context;</div>
<div class="code" style="left:88px;top:1294px">  }</div>
<svg class="abs" style="left:67px;top:1358px" width="18" height="18" viewBox="0 0 18 18">
<defs><radialGradient id="fg" cx="50%" cy="35%" r="60%"><stop offset="0" stop-color="#e4f2fc"/><stop offset="1" stop-color="#b4cadc"/></radialGradient></defs>
<circle cx="9" cy="9" r="8" fill="url(#fg)" stroke="#a5b4c2" stroke-width="1.2"/>
<rect x="4" y="8" width="10" height="2.2" fill="#0c1c30"/></svg>
<div class="code" style="left:88px;top:1354px">  <span class="k">public</span> <span class="k">static</span> <span class="u">AbstractTraceContext</span> getTraceContext() {</div>
</div>
</div></body></html>
